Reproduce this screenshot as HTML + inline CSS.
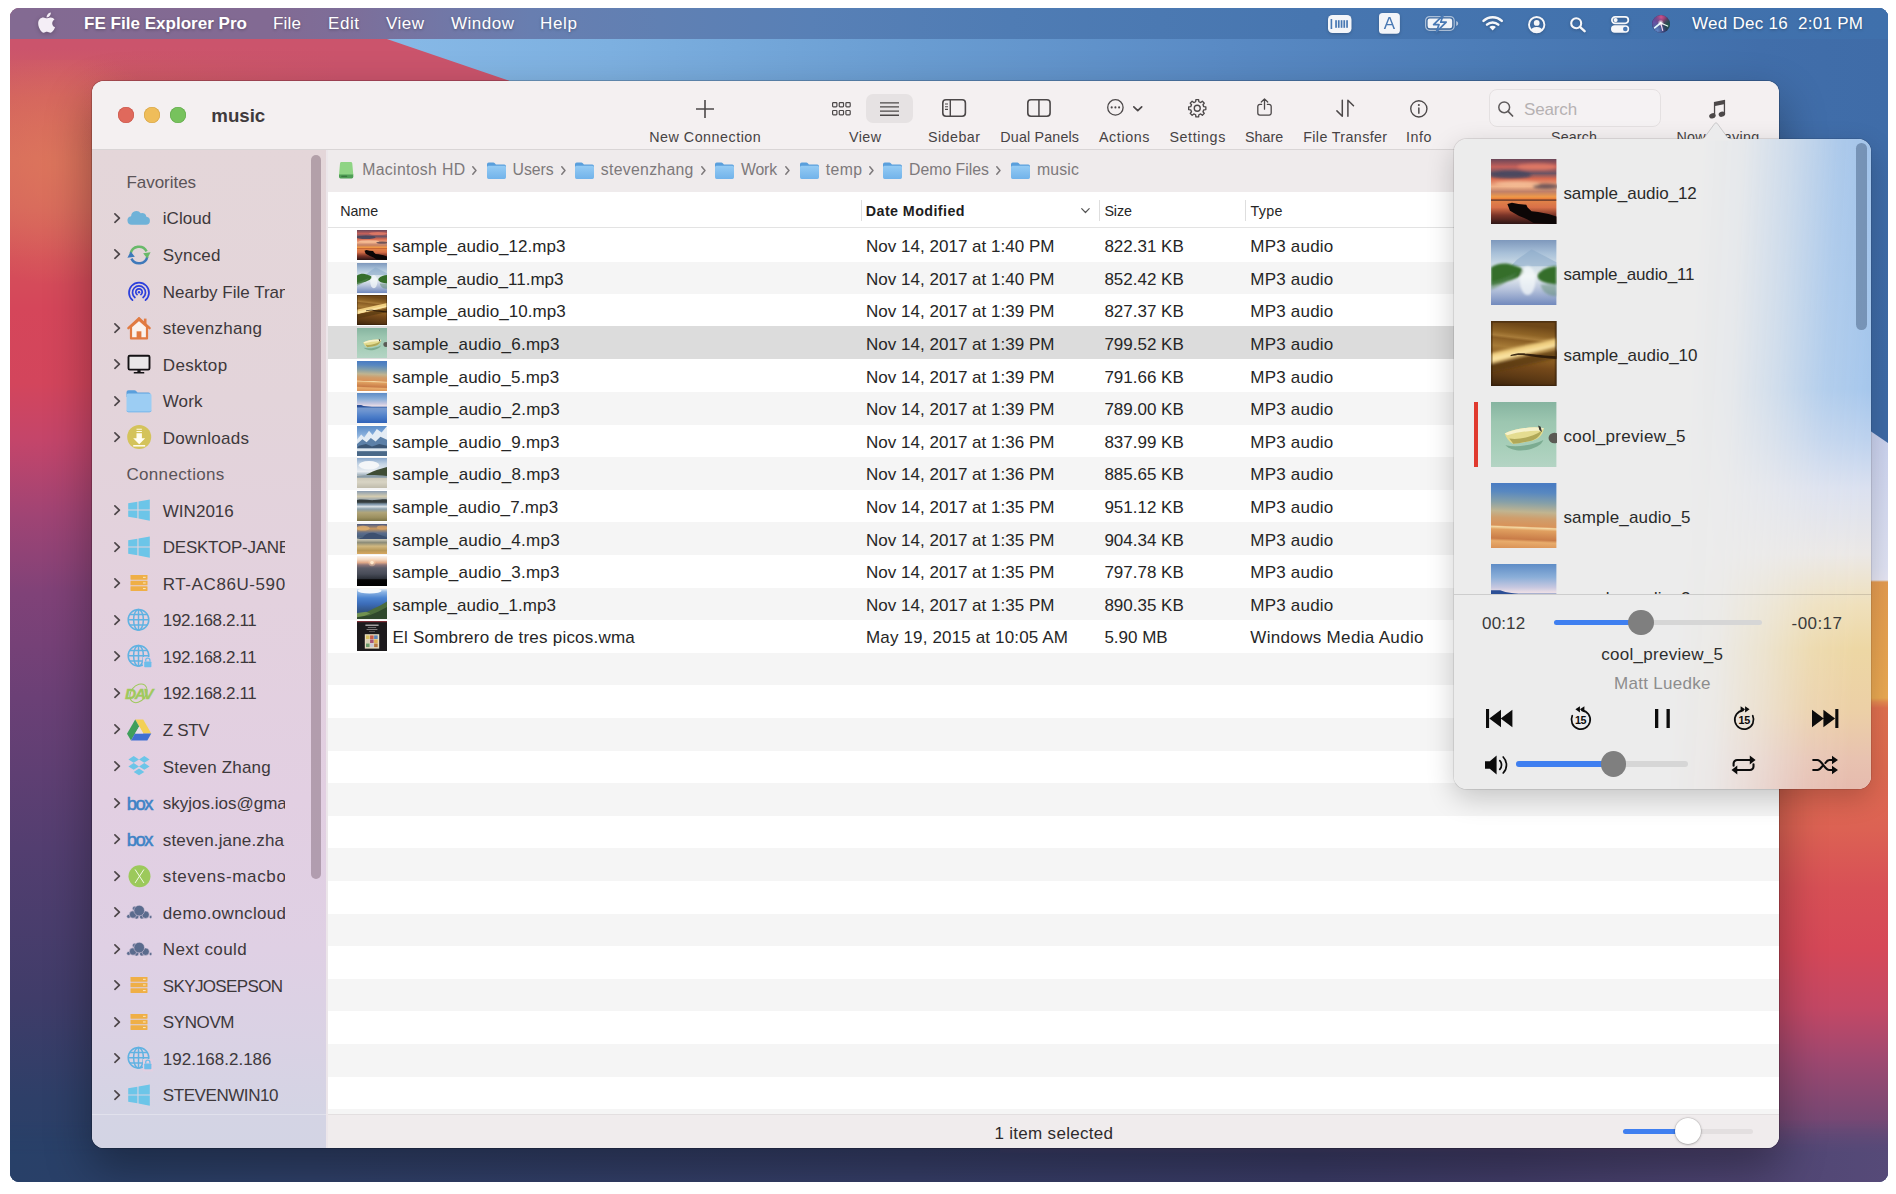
<!DOCTYPE html>
<html lang="en"><head><meta charset="utf-8"><title>FE File Explorer Pro - music</title>
<style>
html,body{margin:0;padding:0;background:#fff;}
body{width:1896px;height:1194px;position:relative;overflow:hidden;font-family:"Liberation Sans",sans-serif;}
.t{position:absolute;white-space:nowrap;line-height:20px;font-size:17px;}
#desk{position:absolute;left:10px;top:8px;width:1878px;height:1174px;border-radius:9px;overflow:hidden;background:#3f6ca8;}
#desk div,#desk svg{position:absolute;}
#menubar{left:0;top:0;width:1878px;height:31px;}
#menubar .t{color:#fff;text-shadow:0 1px 3px rgba(0,0,0,.28);}
#win{position:absolute;left:92px;top:81px;width:1687px;height:1067px;border-radius:12px;box-shadow:0 0 0 1px rgba(0,0,0,.18),0 20px 46px 2px rgba(0,0,0,.33);}
#winin{position:absolute;left:0;top:0;width:1687px;height:1067px;border-radius:12px;overflow:hidden;background:#fff;}
#winin div,#winin svg{position:absolute;}
#pop{position:absolute;left:1454px;top:139px;width:417px;height:650px;border-radius:13px;box-shadow:0 0 0 1px rgba(0,0,0,.09),0 9px 28px rgba(0,0,0,.20);}
#popin{position:absolute;left:0;top:0;width:417px;height:650px;border-radius:13px;overflow:hidden;background:#ececec;}
#popin div,#popin svg{position:absolute;}
.sb .t{color:#3d383b;}
#ov{position:absolute;left:10px;top:8px;width:1878px;height:1174px;border-radius:9px;overflow:hidden;}
#ovin{position:absolute;left:-10px;top:-8px;width:1896px;height:1194px;}

</style></head>
<body>
<div id="desk"><div class="" style="position:absolute;left:0.0px;top:0.0px;width:990.0px;height:1174.0px;background:linear-gradient(to bottom,#cb546c 0,#cb546c 40px,#d2605f 90px,#d66a5c 150px,#d5625c 200px,#d5505a 250px,#d5465a 300px,#d3455c 375px,#c4456a 432px,#a04474 507px,#804278 585px,#6b4076 690px,#533e70 840px,#403c69 990px,#2e3f68 1090px,#284068 1174px)"></div>
<div class="" style="position:absolute;left:0.0px;top:52.0px;width:320.0px;height:270.0px;background:radial-gradient(ellipse 120px 120px at 45px 105px,rgba(222,120,92,.75),rgba(222,120,92,0) 100%)"></div>
<div class="" style="position:absolute;left:990.0px;top:0.0px;width:888.0px;height:1174.0px;background:linear-gradient(to bottom,#3f6ca8 0,#3e6aa6 419px,#3e6aa6 420px,#c9d1ee 421px,#dfe2f3 560px,#e5e5f3 572px,#e49b50 574px,#eaa952 690px,#e58a50 694px,#e0704f 700px,#de6a50 760px,#dc6253 820px,#d85056 880px,#d64858 940px,#c44865 1000px,#a04870 1050px,#7e4873 1100px,#5e4a78 1150px,#4e4a79 1174px)"></div>
<div class="" style="position:absolute;left:1850.0px;top:412.0px;width:28.0px;height:25.0px;background:#3e6aa6;clip-path:polygon(6px 0,28px 0,28px 23px,6px 8px)"></div>
<div class="" style="position:absolute;left:0.0px;top:0.0px;width:1878.0px;height:152.0px;background:linear-gradient(to right,rgba(203,84,108,0) 70px,#cb546c 330px,#cb546c 700px,#3f6ca8 1300px)"></div>
<div class="" style="position:absolute;left:0.0px;top:0.0px;width:1878.0px;height:152.0px;background:linear-gradient(to right,#8abbe8 0,#86b8e6 400px,#7db0e0 600px,#6a9dd2 900px,#5a8bc5 1200px,#4b7bb6 1500px,#416eaa 1750px,#3f6ca8 1878px);clip-path:polygon(286px 0,1878px 0,1878px 152px,731px 152px)"></div>
<div class="" style="position:absolute;left:0.0px;top:1112.0px;width:1878.0px;height:62.0px;background:linear-gradient(to right,#284068 0,#2f4069 300px,#363e68 900px,#3a3b66 1300px,#423d69 1500px,#4d4472 1700px,#564a78 1878px);-webkit-mask-image:linear-gradient(to bottom,transparent 0,#000 34px);mask-image:linear-gradient(to bottom,transparent 0,#000 34px)"></div>
<div id="menubar" style="background:linear-gradient(to right,#836a92 0,#826a93 260px,#7d6e99 340px,#7277a6 430px,#687eb0 520px,#6080b3 650px,#5880b6 800px,#4f7cb4 1000px,#4776b0 1300px,#4272ad 1600px,#3f70ac 1878px)"><svg style="position:absolute;left:28.20px;top:3.80px;overflow:visible;filter:drop-shadow(0 1px 2px rgba(0,0,0,.25));" width="17.20" height="21.30" viewBox="0 28 384 456"><path fill="#f4eef6" d="M318.7 268.7c-.2-36.7 16.4-64.4 50-84.8-18.8-26.9-47.2-41.7-84.7-44.6-35.500-2.800-74.300 20.700-88.500 20.700-15 0-49.400-19.700-76.400-19.700C63.300 141.200 4 184.800 4 273.500q0 39.300 14.400 81.200c12.800 36.700 59 126.700 107.200 125.200 25.200-.600 43-17.900 75.800-17.900 31.800 0 48.300 17.900 76.400 17.900 48.600-.700 90.400-82.500 102.600-119.300-65.200-30.700-61.700-90-61.700-91.900zm-56.600-164.200c27.300-32.400 24.800-61.900 24-72.500-24.100 1.400-52 16.400-67.900 34.900-17.500 19.800-27.800 44.300-25.600 71.900 26.100 2 49.900-11.400 69.500-34.300z"/></svg><span id="t1" class="t " style="left:74.0px;top:6.4px;font-size:17px;color:#fff;font-weight:700;letter-spacing:0.027px;">FE File Explorer Pro</span><span id="t2" class="t " style="left:263.0px;top:6.4px;font-size:17px;color:#fff;letter-spacing:0.202px;">File</span><span id="t3" class="t " style="left:318.0px;top:6.4px;font-size:17px;color:#fff;letter-spacing:0.565px;">Edit</span><span id="t4" class="t " style="left:376.0px;top:6.4px;font-size:17px;color:#fff;letter-spacing:0.484px;">View</span><span id="t5" class="t " style="left:441.0px;top:6.4px;font-size:17px;color:#fff;letter-spacing:0.507px;">Window</span><span id="t6" class="t " style="left:530.0px;top:6.4px;font-size:17px;color:#fff;letter-spacing:0.679px;">Help</span><span id="t7" class="t " style="left:1682.0px;top:6.2px;font-size:17px;color:#fff;letter-spacing:0.278px;">Wed Dec 16&nbsp; 2:01 PM</span><svg style="position:absolute;left:1318.20px;top:6.80px;overflow:visible;filter:drop-shadow(0 1px 1.5px rgba(0,0,0,.22));" width="23.50" height="18.00" viewBox="0 0 23.5 18"><rect x="0" y="0" width="23.5" height="18" rx="4.5" fill="#f3f5f9"/><rect x="2.6" y="4" width="1.6" height="10" fill="#4878b3"/><rect x="7.2" y="5.2" width="1.7" height="7.6" fill="#4878b3"/><rect x="9.9" y="5.2" width="1.7" height="7.6" fill="#4878b3"/><rect x="12.7" y="5.2" width="1.7" height="7.6" fill="#4878b3"/><rect x="15.4" y="5.2" width="1.7" height="7.6" fill="#4878b3"/><rect x="18.2" y="5.2" width="1.7" height="7.6" fill="#4878b3"/></svg><svg style="position:absolute;left:1369.10px;top:5.20px;overflow:visible;filter:drop-shadow(0 1px 1.5px rgba(0,0,0,.22));" width="20.90" height="20.80" viewBox="0 0 20.9 20.8"><rect x="0" y="0" width="20.9" height="20.8" rx="3.6" fill="#f3f5f9"/><text x="10.45" y="16.4" font-family="Liberation Sans,sans-serif" font-size="17" text-anchor="middle" fill="#4878b3">A</text></svg><svg style="position:absolute;left:1415.00px;top:8.30px;overflow:visible;filter:drop-shadow(0 1px 1.5px rgba(0,0,0,.22));" width="33.20" height="14.90" viewBox="0 0 33.2 14.9"><rect x="0.6" y="0.6" width="28.6" height="13.7" rx="4" fill="none" stroke="#fff" stroke-opacity=".55" stroke-width="1.2"/><rect x="2.6" y="2.6" width="24.6" height="9.7" rx="2.2" fill="#f3f5f9"/><path d="M31.2 5v4.9c1.300-.400 2-1.400 2-2.450s-.700-2.050-2-2.450z" fill="#fff" fill-opacity=".6"/><path d="M18.200 -0.800 8.600 8.600h5.400l-2.600 7.200 9.800-9.600h-5.500z" fill="#f3f5f9" stroke="#4878b3" stroke-width="1.700" stroke-linejoin="round"/></svg><svg style="position:absolute;left:1472.00px;top:7.40px;overflow:visible;filter:drop-shadow(0 1px 1.5px rgba(0,0,0,.22));" width="21.30" height="15.50" viewBox="0 0 21.3 15.5"><g fill="none" stroke="#f6f7fa" stroke-width="2.5" stroke-linecap="round"><path d="M1.500 5.900a13.200 13.200 0 0 1 18.300 0"/><path d="M5 9.700a8.200 8.200 0 0 1 11.300 0"/></g><path d="M10.650 15.500 7.400 12.100a4.600 4.600 0 0 1 6.500 0z" fill="#f6f7fa"/></svg><svg style="position:absolute;left:1518.20px;top:7.60px;overflow:visible;filter:drop-shadow(0 1px 1.5px rgba(0,0,0,.22));" width="17.40" height="17.40" viewBox="0 0 17.4 17.4"><defs><clipPath id="ucp"><circle cx="8.7" cy="8.7" r="7.400"/></clipPath></defs><circle cx="8.7" cy="8.700" r="7.700" fill="none" stroke="#f6f7fa" stroke-width="1.900"/><circle cx="8.700" cy="6.900" r="2.900" fill="#f6f7fa"/><ellipse cx="8.700" cy="15.600" rx="6.200" ry="4.700" fill="#f6f7fa" clip-path="url(#ucp)"/></svg><svg style="position:absolute;left:1560.30px;top:8.70px;overflow:visible;filter:drop-shadow(0 1px 1.5px rgba(0,0,0,.22));" width="15.70" height="15.00" viewBox="0 0 15.7 15"><circle cx="6.200" cy="6.200" r="5" fill="none" stroke="#f6f7fa" stroke-width="2.100"/><path d="M9.900 9.900 14.600 14.200" stroke="#f6f7fa" stroke-width="2.400" stroke-linecap="round"/></svg><svg style="position:absolute;left:1601.40px;top:8.30px;overflow:visible;filter:drop-shadow(0 1px 1.5px rgba(0,0,0,.22));" width="18.20" height="16.70" viewBox="0 0 18.2 16.7"><rect x="0.900" y="0.900" width="16.400" height="6.400" rx="3.200" fill="none" stroke="#f6f7fa" stroke-width="1.800"/><circle cx="4.600" cy="4.100" r="2.100" fill="#f6f7fa"/><rect x="0" y="9.300" width="18.200" height="7.400" rx="3.700" fill="#f6f7fa"/><circle cx="14.300" cy="13" r="2.300" fill="#4878b3"/></svg><svg style="position:absolute;left:1642.00px;top:6.80px;overflow:visible;" width="18.00" height="18.00" viewBox="0 0 18 18"><defs><clipPath id="sgc"><circle cx="9" cy="9" r="8.900"/></clipPath><radialGradient id="sg1" cx=".5" cy=".12" r=".55"><stop offset="0" stop-color="#d0528c"/><stop offset="1" stop-color="#d0528c" stop-opacity="0"/></radialGradient><radialGradient id="sg2" cx=".1" cy=".4" r=".5"><stop offset="0" stop-color="#6a52a8"/><stop offset="1" stop-color="#6a52a8" stop-opacity="0"/></radialGradient><radialGradient id="sg3" cx=".95" cy=".55" r=".45"><stop offset="0" stop-color="#1f5a4c"/><stop offset="1" stop-color="#1f5a4c" stop-opacity="0"/></radialGradient><radialGradient id="sg4" cx=".3" cy=".85" r=".5"><stop offset="0" stop-color="#5f86c6"/><stop offset="1" stop-color="#5f86c6" stop-opacity="0"/></radialGradient><radialGradient id="sg5" cx=".5" cy=".5" r=".5"><stop offset="0" stop-color="#fff"/><stop offset="1" stop-color="#fff" stop-opacity="0"/></radialGradient><filter id="sgb" x="-30%" y="-30%" width="160%" height="160%"><feGaussianBlur stdDeviation=".550"/></filter></defs><circle cx="9" cy="9" r="9" fill="#2e2a58"/><g clip-path="url(#sgc)"><rect width="18" height="18" fill="url(#sg1)"/><rect width="18" height="18" fill="url(#sg2)"/><rect width="18" height="18" fill="url(#sg3)"/><rect width="18" height="18" fill="url(#sg4)"/><g filter="url(#sgb)" stroke-linecap="round"><path d="M8.700 8 2.600 12.800" stroke="#e4fbff" stroke-width="1.700"/><path d="M8.700 8 10.700 15.300" stroke="#f6d2f0" stroke-width="1.200"/><path d="M8.700 8 15.600 11" stroke="#eefaf2" stroke-width="1.300"/></g><circle cx="8.700" cy="7.800" r="3.200" fill="url(#sg5)"/></g></svg></div></div>
<div id="ov"><div id="ovin"><div id="win"><div id="winin" class="sb"><div class="" style="position:absolute;left:0.0px;top:0.0px;width:1687.0px;height:69.0px;background:#f4f0f1;border-bottom:1px solid #d9d5d6;box-sizing:border-box"></div>
<div class="" style="position:absolute;left:25.9px;top:25.9px;width:16.0px;height:16.0px;border-radius:50%;background:#e0695c;box-shadow:inset 0 0 0 .6px #c9574b"></div>
<div class="" style="position:absolute;left:51.9px;top:25.9px;width:16.0px;height:16.0px;border-radius:50%;background:#efbd5a;box-shadow:inset 0 0 0 .6px #d5a446"></div>
<div class="" style="position:absolute;left:77.9px;top:25.9px;width:16.0px;height:16.0px;border-radius:50%;background:#77c25d;box-shadow:inset 0 0 0 .6px #62a94b"></div>
<span id="t8" class="t " style="left:119.3px;top:24.9px;font-size:18.7px;color:#3f3a3c;font-weight:700;letter-spacing:-0.030px;">music</span>
<svg style="position:absolute;left:603.90px;top:18.50px;overflow:visible;" width="18.00" height="18.00" viewBox="0 0 18 18"><path d="M9 0v18M0 9h18" stroke="#4c4849" stroke-width="1.600" fill="none"/></svg>
<span id="t9" class="t " style="left:557.2px;top:45.5px;font-size:14.3px;color:#474344;letter-spacing:0.514px;">New Connection</span>
<svg style="position:absolute;left:739.60px;top:20.70px;overflow:visible;" width="18.80" height="13.50" viewBox="0 0 18.8 13.5"><rect x="0.60" y="0.60" width="4.300" height="4.300" rx=".800" fill="none" stroke="#4c4849" stroke-width="1.200"/><rect x="0.60" y="8.50" width="4.300" height="4.300" rx=".800" fill="none" stroke="#4c4849" stroke-width="1.200"/><rect x="7.25" y="0.60" width="4.300" height="4.300" rx=".800" fill="none" stroke="#4c4849" stroke-width="1.200"/><rect x="7.25" y="8.50" width="4.300" height="4.300" rx=".800" fill="none" stroke="#4c4849" stroke-width="1.200"/><rect x="13.90" y="0.60" width="4.300" height="4.300" rx=".800" fill="none" stroke="#4c4849" stroke-width="1.200"/><rect x="13.90" y="8.50" width="4.300" height="4.300" rx=".800" fill="none" stroke="#4c4849" stroke-width="1.200"/></svg>
<div class="" style="position:absolute;left:774.2px;top:13.3px;width:46.5px;height:28.5px;border-radius:7px;background:#e6e2e3"></div>
<svg style="position:absolute;left:788.00px;top:20.50px;overflow:visible;" width="19.00" height="14.00" viewBox="0 0 19 14"><path d="M0 0.80h19" stroke="#4c4849" stroke-width="1.300"/><path d="M0 4.95h19" stroke="#4c4849" stroke-width="1.300"/><path d="M0 9.10h19" stroke="#4c4849" stroke-width="1.300"/><path d="M0 13.25h19" stroke="#4c4849" stroke-width="1.300"/></svg>
<span id="t10" class="t " style="left:757.0px;top:45.5px;font-size:14.3px;color:#474344;letter-spacing:0.422px;">View</span>
<svg style="position:absolute;left:849.80px;top:18.40px;overflow:visible;" width="24.20" height="18.10" viewBox="0 0 24.2 18.1"><rect x=".800" y=".800" width="22.600" height="16.500" rx="3.200" fill="none" stroke="#4c4849" stroke-width="1.600"/><path d="M8.300 1v16.200" stroke="#4c4849" stroke-width="1.400"/><path d="M3 5h3M3 7.700h3M3 10.400h3" stroke="#4c4849" stroke-width="1.100"/></svg>
<span id="t11" class="t " style="left:836.0px;top:45.5px;font-size:14.3px;color:#474344;letter-spacing:0.453px;">Sidebar</span>
<svg style="position:absolute;left:935.40px;top:18.40px;overflow:visible;" width="23.90" height="18.10" viewBox="0 0 23.9 18.1"><rect x=".800" y=".800" width="22.300" height="16.500" rx="3.200" fill="none" stroke="#4c4849" stroke-width="1.600"/><path d="M11.950 1v16.200" stroke="#4c4849" stroke-width="1.500"/></svg>
<span id="t12" class="t " style="left:908.3px;top:45.5px;font-size:14.3px;color:#474344;letter-spacing:0.160px;">Dual Panels</span>
<svg style="position:absolute;left:1015.00px;top:18.40px;overflow:visible;" width="16.80" height="16.80" viewBox="0 0 16.8 16.8"><circle cx="8.400" cy="8.400" r="7.700" fill="none" stroke="#4c4849" stroke-width="1.300"/><circle cx="4.700" cy="8.400" r="1.050" fill="#4c4849"/><circle cx="8.400" cy="8.400" r="1.050" fill="#4c4849"/><circle cx="12.100" cy="8.400" r="1.050" fill="#4c4849"/></svg>
<svg style="position:absolute;left:1041.30px;top:25.40px;overflow:visible;" width="9.50" height="5.20" viewBox="0 0 9.5 5.2"><path d="M.800 .800 4.750 4.600 8.700 .800" fill="none" stroke="#4c4849" stroke-width="1.700" stroke-linecap="round" stroke-linejoin="round"/></svg>
<span id="t13" class="t " style="left:1007.0px;top:45.5px;font-size:14.3px;color:#474344;letter-spacing:0.585px;">Actions</span>
<svg style="position:absolute;left:1095.80px;top:18.40px;overflow:visible;" width="18.50" height="18.50" viewBox="0 0 18.5 18.5"><path d="M7.63 2.75L7.89 0.66L10.61 0.66L10.87 2.75L12.71 3.51L14.36 2.21L16.29 4.14L14.99 5.79L15.75 7.63L17.84 7.89L17.84 10.61L15.75 10.87L14.99 12.71L16.29 14.36L14.36 16.29L12.71 14.99L10.87 15.75L10.61 17.84L7.89 17.84L7.63 15.75L5.79 14.99L4.14 16.29L2.21 14.36L3.51 12.71L2.75 10.87L0.66 10.61L0.66 7.89L2.75 7.63L3.51 5.79L2.21 4.14L4.14 2.21L5.79 3.51Z" fill="none" stroke="#4c4849" stroke-width="1.350" stroke-linejoin="round"/><circle cx="9.250" cy="9.250" r="3" fill="none" stroke="#4c4849" stroke-width="1.350"/></svg>
<span id="t14" class="t " style="left:1077.4px;top:45.5px;font-size:14.3px;color:#474344;letter-spacing:0.605px;">Settings</span>
<svg style="position:absolute;left:1164.70px;top:17.00px;overflow:visible;" width="15.00" height="17.90" viewBox="0 0 15 17.9"><path d="M4.600 6.400H2.900a2.100 2.100 0 0 0-2.100 2.100v6.500a2.100 2.100 0 0 0 2.100 2.100h9.200a2.100 2.100 0 0 0 2.100-2.100V8.500a2.100 2.100 0 0 0-2.100-2.100h-1.700" fill="none" stroke="#4c4849" stroke-width="1.300" stroke-linecap="round"/><path d="M7.500 11.200V1M4.300 4 7.500 .900 10.700 4" fill="none" stroke="#4c4849" stroke-width="1.300" stroke-linecap="round" stroke-linejoin="round"/></svg>
<span id="t15" class="t " style="left:1153.0px;top:45.5px;font-size:14.3px;color:#474344;letter-spacing:0.034px;">Share</span>
<svg style="position:absolute;left:1243.90px;top:18.40px;overflow:visible;" width="18.50" height="18.10" viewBox="0 0 18.5 18.1"><path d="M6.300 1.200V17.300L.900 11.900" fill="none" stroke="#4c4849" stroke-width="1.500" stroke-linecap="round" stroke-linejoin="round"/><path d="M11.900 17.300V1.200L17.500 6.800" fill="none" stroke="#4c4849" stroke-width="1.500" stroke-linecap="round" stroke-linejoin="round"/></svg>
<span id="t16" class="t " style="left:1211.2px;top:45.5px;font-size:14.3px;color:#474344;letter-spacing:0.370px;">File Transfer</span>
<svg style="position:absolute;left:1317.90px;top:18.95px;overflow:visible;" width="17.70" height="17.70" viewBox="0 0 17.7 17.7"><circle cx="8.850" cy="8.850" r="8.100" fill="none" stroke="#4c4849" stroke-width="1.400"/><circle cx="8.850" cy="5" r="1.050" fill="#4c4849"/><path d="M8.850 7.900v5.400" fill="none" stroke="#4c4849" stroke-width="1.500" stroke-linecap="round"/></svg>
<span id="t17" class="t " style="left:1314.1px;top:45.5px;font-size:14.3px;color:#474344;letter-spacing:0.480px;">Info</span>
<div class="" style="position:absolute;left:1396.5px;top:8.3px;width:172.4px;height:37.9px;border-radius:8px;background:#f5f2f3;border:1px solid #e4e0e1;box-sizing:border-box"></div>
<svg style="position:absolute;left:1406.00px;top:19.50px;overflow:visible;" width="15.40" height="16.00" viewBox="0 0 15.4 16"><circle cx="6.200" cy="6.300" r="5.400" fill="none" stroke="#5e5a5b" stroke-width="1.500"/><path d="M10.100 10.300 14.600 15" stroke="#5e5a5b" stroke-width="1.700" stroke-linecap="round"/></svg>
<span id="t18" class="t " style="left:1432.0px;top:18.6px;font-size:17px;color:#b5b1b2;letter-spacing:-0.134px;">Search</span>
<span id="t19" class="t " style="left:1459.0px;top:45.5px;font-size:14.3px;color:#474344;letter-spacing:0.137px;">Search</span>
<svg style="position:absolute;left:1617.40px;top:18.50px;overflow:visible;" width="16.60" height="18.60" viewBox="0 0 16.6 18.6"><g fill="#4c4849"><ellipse cx="3.400" cy="15.800" rx="3.300" ry="2.550" transform="rotate(-20 3.400 15.800)"/><ellipse cx="12.900" cy="14.200" rx="3.300" ry="2.550" transform="rotate(-20 12.900 14.200)"/><path d="M4.900 1.900 16.100 -.300V14.200H14.800V4.200L6.200 6V15.800H4.900z"/></g></svg>
<span id="t20" class="t " style="left:1584.4px;top:45.5px;font-size:14.3px;color:#474344;letter-spacing:0.342px;">Now Playing</span>
<div class="" style="position:absolute;left:236.0px;top:69.0px;width:1451.0px;height:41.6px;background:#efebec"></div>
<svg style="position:absolute;left:247.00px;top:80.60px;overflow:visible;" width="14.30" height="16.40" viewBox="0 0 14.3 16.4"><path d="M2.600 0h9.100a1.600 1.600 0 0 1 1.600 1.400l1 11.600H0L1 1.400A1.600 1.600 0 0 1 2.600 0z" fill="#8fd484"/><path d="M0 12.500h14.300v2.300a1.600 1.600 0 0 1-1.600 1.600H1.600A1.600 1.600 0 0 1 0 14.800z" fill="#4f9e55"/><rect x="2.200" y="13.800" width="6" height="1" rx=".5" fill="#356e3a"/></svg>
<span id="t21" class="t " style="left:270.2px;top:79.4px;font-size:15.8px;color:#7d797b;letter-spacing:0.336px;">Macintosh HD</span>
<svg style="position:absolute;left:380.40px;top:85.30px;overflow:visible;" width="4.70" height="9.00" viewBox="0 0 4.7 9"><path d="M.800 .800 4 4.500 .800 8.200" fill="none" stroke="#7d797b" stroke-width="1.500" stroke-linecap="round" stroke-linejoin="round"/></svg>
<span id="t22" class="t " style="left:420.6px;top:79.4px;font-size:15.8px;color:#7d797b;letter-spacing:-0.038px;">Users</span>
<svg style="position:absolute;left:394.60px;top:80.60px;overflow:visible;" width="19.00" height="16.90" viewBox="0 0 19 16.9"><defs><linearGradient id="fg" x1="0" y1="0" x2="0" y2="1"><stop offset="0" stop-color="#95cbf4"/><stop offset="1" stop-color="#72b3ea"/></linearGradient></defs><path d="M0 2.200A1.700 1.700 0 0 1 1.700 .500H6.300c.600 0 1.100.250 1.500.700l1.100 1.300h8.400A1.700 1.700 0 0 1 19 4.200V6H0z" fill="#5a9fdc"/><path d="M0 5.200A1.500 1.500 0 0 1 1.500 3.700h16A1.500 1.500 0 0 1 19 5.200v10.100a1.600 1.600 0 0 1-1.600 1.600H1.600A1.600 1.600 0 0 1 0 15.300z" fill="url(#fg)"/></svg>
<svg style="position:absolute;left:469.00px;top:85.30px;overflow:visible;" width="4.70" height="9.00" viewBox="0 0 4.7 9"><path d="M.800 .800 4 4.500 .800 8.200" fill="none" stroke="#7d797b" stroke-width="1.500" stroke-linecap="round" stroke-linejoin="round"/></svg>
<span id="t23" class="t " style="left:508.8px;top:79.4px;font-size:15.8px;color:#7d797b;letter-spacing:0.300px;">stevenzhang</span>
<svg style="position:absolute;left:483.30px;top:80.60px;overflow:visible;" width="19.00" height="16.90" viewBox="0 0 19 16.9"><defs><linearGradient id="fg" x1="0" y1="0" x2="0" y2="1"><stop offset="0" stop-color="#95cbf4"/><stop offset="1" stop-color="#72b3ea"/></linearGradient></defs><path d="M0 2.200A1.700 1.700 0 0 1 1.700 .500H6.300c.600 0 1.100.250 1.500.700l1.100 1.300h8.400A1.700 1.700 0 0 1 19 4.200V6H0z" fill="#5a9fdc"/><path d="M0 5.200A1.500 1.500 0 0 1 1.500 3.700h16A1.500 1.500 0 0 1 19 5.200v10.100a1.600 1.600 0 0 1-1.600 1.600H1.600A1.600 1.600 0 0 1 0 15.300z" fill="url(#fg)"/></svg>
<svg style="position:absolute;left:608.70px;top:85.30px;overflow:visible;" width="4.70" height="9.00" viewBox="0 0 4.7 9"><path d="M.800 .800 4 4.500 .800 8.200" fill="none" stroke="#7d797b" stroke-width="1.500" stroke-linecap="round" stroke-linejoin="round"/></svg>
<span id="t24" class="t " style="left:648.9px;top:79.4px;font-size:15.8px;color:#7d797b;letter-spacing:-0.092px;">Work</span>
<svg style="position:absolute;left:623.00px;top:80.60px;overflow:visible;" width="19.00" height="16.90" viewBox="0 0 19 16.9"><defs><linearGradient id="fg" x1="0" y1="0" x2="0" y2="1"><stop offset="0" stop-color="#95cbf4"/><stop offset="1" stop-color="#72b3ea"/></linearGradient></defs><path d="M0 2.200A1.700 1.700 0 0 1 1.700 .500H6.300c.600 0 1.100.250 1.500.700l1.100 1.300h8.400A1.700 1.700 0 0 1 19 4.200V6H0z" fill="#5a9fdc"/><path d="M0 5.200A1.500 1.500 0 0 1 1.500 3.700h16A1.500 1.500 0 0 1 19 5.200v10.100a1.600 1.600 0 0 1-1.600 1.600H1.600A1.600 1.600 0 0 1 0 15.300z" fill="url(#fg)"/></svg>
<svg style="position:absolute;left:692.50px;top:85.30px;overflow:visible;" width="4.70" height="9.00" viewBox="0 0 4.7 9"><path d="M.800 .800 4 4.500 .800 8.200" fill="none" stroke="#7d797b" stroke-width="1.500" stroke-linecap="round" stroke-linejoin="round"/></svg>
<span id="t25" class="t " style="left:733.7px;top:79.4px;font-size:15.8px;color:#7d797b;letter-spacing:0.393px;">temp</span>
<svg style="position:absolute;left:707.80px;top:80.60px;overflow:visible;" width="19.00" height="16.90" viewBox="0 0 19 16.9"><defs><linearGradient id="fg" x1="0" y1="0" x2="0" y2="1"><stop offset="0" stop-color="#95cbf4"/><stop offset="1" stop-color="#72b3ea"/></linearGradient></defs><path d="M0 2.200A1.700 1.700 0 0 1 1.700 .500H6.300c.600 0 1.100.250 1.500.700l1.100 1.300h8.400A1.700 1.700 0 0 1 19 4.200V6H0z" fill="#5a9fdc"/><path d="M0 5.200A1.500 1.500 0 0 1 1.500 3.700h16A1.500 1.500 0 0 1 19 5.200v10.100a1.600 1.600 0 0 1-1.600 1.600H1.600A1.600 1.600 0 0 1 0 15.300z" fill="url(#fg)"/></svg>
<svg style="position:absolute;left:777.30px;top:85.30px;overflow:visible;" width="4.70" height="9.00" viewBox="0 0 4.7 9"><path d="M.800 .800 4 4.500 .800 8.200" fill="none" stroke="#7d797b" stroke-width="1.500" stroke-linecap="round" stroke-linejoin="round"/></svg>
<span id="t26" class="t " style="left:817.1px;top:79.4px;font-size:15.8px;color:#7d797b;letter-spacing:-0.020px;">Demo Files</span>
<svg style="position:absolute;left:791.10px;top:80.60px;overflow:visible;" width="19.00" height="16.90" viewBox="0 0 19 16.9"><defs><linearGradient id="fg" x1="0" y1="0" x2="0" y2="1"><stop offset="0" stop-color="#95cbf4"/><stop offset="1" stop-color="#72b3ea"/></linearGradient></defs><path d="M0 2.200A1.700 1.700 0 0 1 1.700 .500H6.300c.600 0 1.100.250 1.500.700l1.100 1.300h8.400A1.700 1.700 0 0 1 19 4.200V6H0z" fill="#5a9fdc"/><path d="M0 5.200A1.500 1.500 0 0 1 1.500 3.700h16A1.500 1.500 0 0 1 19 5.200v10.100a1.600 1.600 0 0 1-1.600 1.600H1.600A1.600 1.600 0 0 1 0 15.300z" fill="url(#fg)"/></svg>
<svg style="position:absolute;left:904.10px;top:85.30px;overflow:visible;" width="4.70" height="9.00" viewBox="0 0 4.7 9"><path d="M.800 .800 4 4.500 .800 8.200" fill="none" stroke="#7d797b" stroke-width="1.500" stroke-linecap="round" stroke-linejoin="round"/></svg>
<span id="t27" class="t " style="left:944.9px;top:79.4px;font-size:15.8px;color:#7d797b;letter-spacing:0.212px;">music</span>
<svg style="position:absolute;left:918.50px;top:80.60px;overflow:visible;" width="19.00" height="16.90" viewBox="0 0 19 16.9"><defs><linearGradient id="fg" x1="0" y1="0" x2="0" y2="1"><stop offset="0" stop-color="#95cbf4"/><stop offset="1" stop-color="#72b3ea"/></linearGradient></defs><path d="M0 2.200A1.700 1.700 0 0 1 1.700 .500H6.300c.600 0 1.100.250 1.500.700l1.100 1.300h8.400A1.700 1.700 0 0 1 19 4.200V6H0z" fill="#5a9fdc"/><path d="M0 5.200A1.500 1.500 0 0 1 1.500 3.700h16A1.500 1.500 0 0 1 19 5.200v10.100a1.600 1.600 0 0 1-1.600 1.600H1.600A1.600 1.600 0 0 1 0 15.300z" fill="url(#fg)"/></svg>
<div class="" style="position:absolute;left:236.0px;top:1033.0px;width:1451.0px;height:34.0px;background:#f0eced;border-top:1px solid #e3dfe0;box-sizing:border-box"></div>
<span id="t28" class="t " style="left:902.5px;top:1043.2px;font-size:17px;color:#2e2a2b;letter-spacing:0.297px;">1 item selected</span>
<div class="" style="position:absolute;left:1530.8px;top:1048.2px;width:130.3px;height:4.6px;border-radius:3px;background:#e3dfe0"></div>
<div class="" style="position:absolute;left:1530.8px;top:1048.2px;width:67.2px;height:4.6px;border-radius:3px;background:#3f7ff0"></div>
<div class="" style="position:absolute;left:1583.1px;top:1037.4px;width:26.0px;height:26.0px;border-radius:50%;background:#fff;box-shadow:0 .5px 2.500px rgba(0,0,0,.35),0 0 0 .5px rgba(0,0,0,.10)"></div>
<div class="" style="position:absolute;left:0.0px;top:69.0px;width:234.0px;height:998.0px;background:linear-gradient(to bottom,#e4d6d9 0,#e3d4da 250px,#e3d1de 450px,#e2cfe2 650px,#dfd0e4 800px,#d9d2e4 900px,#d4d4e4 964px,#d3d4e4 997px)"></div>
<div class="" style="position:absolute;left:234.0px;top:69.0px;width:2.0px;height:998.0px;background:#ece6ea"></div>
<div class="" style="position:absolute;left:0.0px;top:1032.5px;width:234.0px;height:1.5px;background:rgba(255,255,255,.30)"></div>
<div class="" style="position:absolute;left:219.0px;top:73.5px;width:10.0px;height:724.5px;border-radius:5px;background:rgba(120,95,110,.45)"></div>
<span id="t29" class="t " style="left:34.4px;top:91.9px;font-size:17px;color:#5b5458;letter-spacing:-0.028px;">Favorites</span>
<svg style="position:absolute;left:22.40px;top:131.90px;overflow:visible;" width="6.30" height="10.20" viewBox="0 0 6.3 10.2"><path d="M.900 .900 5.400 5.100 .900 9.300" fill="none" stroke="#4d4649" stroke-width="1.700" stroke-linecap="round" stroke-linejoin="round"/></svg>
<svg style="position:absolute;left:34.40px;top:124.00px;overflow:visible;" width="26.00" height="26.00" viewBox="0 0 26 26"><path d="M5.800 19.800a4.300 4.300 0 0 1-.700-8.550 5.300 5.300 0 0 1 9.600-2.900 4.200 4.200 0 0 1 5.700 3.300 4.100 4.100 0 0 1-.400 8.150z" fill="#6fb2d8"/></svg>
<svg style="position:absolute;left:22.40px;top:168.44px;overflow:visible;" width="6.30" height="10.20" viewBox="0 0 6.3 10.2"><path d="M.900 .900 5.400 5.100 .900 9.300" fill="none" stroke="#4d4649" stroke-width="1.700" stroke-linecap="round" stroke-linejoin="round"/></svg>
<svg style="position:absolute;left:34.40px;top:160.54px;overflow:visible;" width="26.00" height="26.00" viewBox="0 0 26 26"><g fill="none" stroke-width="2.500"><path d="M4.600 11.600A8.600 8.600 0 0 1 20.600 9.300" stroke="#69b96a"/><path d="M21.400 14.400A8.600 8.600 0 0 1 5.400 16.700" stroke="#3e79ba"/></g><path d="M17.200 11.300 24.600 10.300 21.300 16.600z" fill="#69b96a"/><path d="M8.800 14.700 1.400 15.700 4.700 9.400z" fill="#3e79ba"/></svg>
<svg style="position:absolute;left:34.40px;top:197.08px;overflow:visible;" width="26.00" height="26.00" viewBox="0 0 26 26"><g fill="none" stroke="#2c40dc" stroke-width="1.700" stroke-linecap="round"><path d="M6.500 22.200A10 10 0 1 1 19.500 22.200"/><path d="M8.900 19.500A6.500 6.500 0 1 1 17.100 19.500"/><path d="M11.100 16.600A3.200 3.200 0 1 1 14.900 16.600"/></g><circle cx="13" cy="14.200" r="1.200" fill="#2c40dc"/></svg>
<svg style="position:absolute;left:22.40px;top:241.52px;overflow:visible;" width="6.30" height="10.20" viewBox="0 0 6.3 10.2"><path d="M.900 .900 5.400 5.100 .900 9.300" fill="none" stroke="#4d4649" stroke-width="1.700" stroke-linecap="round" stroke-linejoin="round"/></svg>
<svg style="position:absolute;left:34.40px;top:233.62px;overflow:visible;" width="26.00" height="26.00" viewBox="0 0 26 26"><path d="M13 3.400 2.400 13.200" stroke="#e17b42" stroke-width="2.400" stroke-linecap="round"/><path d="M13 3.400 23.600 13.200" stroke="#e17b42" stroke-width="2.400" stroke-linecap="round"/><rect x="17.900" y="3.600" width="2.600" height="5.500" fill="#e17b42"/><path d="M5 11.800 13 4.600 21 11.800V23.400H5z" fill="#fbf3ee" stroke="#e17b42" stroke-width="2.200" stroke-linejoin="round"/><rect x="10.600" y="16.300" width="4.800" height="7.200" fill="#e17b42"/></svg>
<svg style="position:absolute;left:22.40px;top:278.06px;overflow:visible;" width="6.30" height="10.20" viewBox="0 0 6.3 10.2"><path d="M.900 .900 5.400 5.100 .900 9.300" fill="none" stroke="#4d4649" stroke-width="1.700" stroke-linecap="round" stroke-linejoin="round"/></svg>
<svg style="position:absolute;left:34.40px;top:270.16px;overflow:visible;" width="26.00" height="26.00" viewBox="0 0 26 26"><g transform="translate(0 1.200)"><rect x="2.500" y="3.600" width="21" height="13.800" rx="1.300" fill="#e9e7e8" stroke="#141214" stroke-width="1.900"/><rect x="11.400" y="17.900" width="3.200" height="2.300" fill="#141214"/><rect x="7.700" y="19.700" width="10.600" height="1.700" rx=".500" fill="#141214"/></g></svg>
<svg style="position:absolute;left:22.40px;top:314.60px;overflow:visible;" width="6.30" height="10.20" viewBox="0 0 6.3 10.2"><path d="M.900 .900 5.400 5.100 .900 9.300" fill="none" stroke="#4d4649" stroke-width="1.700" stroke-linecap="round" stroke-linejoin="round"/></svg>
<svg style="position:absolute;left:34.40px;top:306.70px;overflow:visible;" width="26.00" height="26.00" viewBox="0 0 26 26"><path d="M.500 4.300A2 2 0 0 1 2.500 2.300H8.400c.800 0 1.400.300 1.900.900l1.200 1.400h11A2 2 0 0 1 24.500 6.600V9H.500z" fill="#5a9fdc"/><path d="M.500 7.300A1.800 1.800 0 0 1 2.300 5.500H23.700A1.800 1.800 0 0 1 25.500 7.300V22.300a2 2 0 0 1-2 2H2.500a2 2 0 0 1-2-2z" fill="#9ccdf3"/><path d="M.500 22v.300a2 2 0 0 0 2 2h21a2 2 0 0 0 2-2V22a2 2 0 0 1-2 1.500H2.500A2 2 0 0 1 .500 22z" fill="#6fb0e8"/></svg>
<svg style="position:absolute;left:22.40px;top:351.14px;overflow:visible;" width="6.30" height="10.20" viewBox="0 0 6.3 10.2"><path d="M.900 .900 5.400 5.100 .900 9.300" fill="none" stroke="#4d4649" stroke-width="1.700" stroke-linecap="round" stroke-linejoin="round"/></svg>
<svg style="position:absolute;left:34.40px;top:343.24px;overflow:visible;" width="26.00" height="26.00" viewBox="0 0 26 26"><circle cx="13.200" cy="13" r="12" fill="#d4c35b"/><path d="M10.500 5.300h5.400M10.500 7.500h5.400" stroke="#fffbe8" stroke-width="1.100"/><path d="M10.500 9.300h5.400v5h3.300l-6 6-6-6h3.300z" fill="#fffdf2"/><path d="M7.200 21.800h12" stroke="#fffdf2" stroke-width="1.500"/></svg>
<span id="t37" class="t " style="left:34.4px;top:384.2px;font-size:17px;color:#5b5458;letter-spacing:0.348px;">Connections</span>
<svg style="position:absolute;left:22.40px;top:424.22px;overflow:visible;" width="6.30" height="10.20" viewBox="0 0 6.3 10.2"><path d="M.900 .900 5.400 5.100 .900 9.300" fill="none" stroke="#4d4649" stroke-width="1.700" stroke-linecap="round" stroke-linejoin="round"/></svg>
<svg style="position:absolute;left:34.40px;top:416.32px;overflow:visible;" width="26.00" height="26.00" viewBox="0 0 26 26"><path d="M2.200 6.300 11.400 4.800V12.400H2.200z" fill="#6cc5e8"/><path d="M12.500 4.600 23.800 2.500V12.400H12.500z" fill="#6cc5e8"/><path d="M2.200 13.500H11.400V21.200L2.200 19.700z" fill="#6cc5e8"/><path d="M12.500 13.500H23.800V23.700L12.500 21.500z" fill="#6cc5e8"/></svg>
<svg style="position:absolute;left:22.40px;top:460.76px;overflow:visible;" width="6.30" height="10.20" viewBox="0 0 6.3 10.2"><path d="M.900 .900 5.400 5.100 .900 9.300" fill="none" stroke="#4d4649" stroke-width="1.700" stroke-linecap="round" stroke-linejoin="round"/></svg>
<svg style="position:absolute;left:34.40px;top:452.86px;overflow:visible;" width="26.00" height="26.00" viewBox="0 0 26 26"><path d="M2.200 6.300 11.400 4.800V12.400H2.200z" fill="#6cc5e8"/><path d="M12.500 4.600 23.800 2.500V12.400H12.500z" fill="#6cc5e8"/><path d="M2.200 13.500H11.400V21.200L2.200 19.700z" fill="#6cc5e8"/><path d="M12.500 13.500H23.800V23.700L12.500 21.500z" fill="#6cc5e8"/></svg>
<svg style="position:absolute;left:22.40px;top:497.30px;overflow:visible;" width="6.30" height="10.20" viewBox="0 0 6.3 10.2"><path d="M.900 .900 5.400 5.100 .900 9.300" fill="none" stroke="#4d4649" stroke-width="1.700" stroke-linecap="round" stroke-linejoin="round"/></svg>
<svg style="position:absolute;left:34.40px;top:489.40px;overflow:visible;" width="26.00" height="26.00" viewBox="0 0 26 26"><rect x="4.500" y="5.1" width="17" height="4.600" rx=".400" fill="#efaf46"/><rect x="17" y="6.8" width="2.700" height="1.100" fill="#fbe4b4"/><rect x="4.500" y="10.7" width="17" height="4.600" rx=".400" fill="#efaf46"/><rect x="17" y="12.4" width="2.700" height="1.100" fill="#fbe4b4"/><rect x="4.500" y="16.3" width="17" height="4.600" rx=".400" fill="#efaf46"/><rect x="17" y="18.0" width="2.700" height="1.100" fill="#fbe4b4"/></svg>
<svg style="position:absolute;left:22.40px;top:533.84px;overflow:visible;" width="6.30" height="10.20" viewBox="0 0 6.3 10.2"><path d="M.900 .900 5.400 5.100 .900 9.300" fill="none" stroke="#4d4649" stroke-width="1.700" stroke-linecap="round" stroke-linejoin="round"/></svg>
<svg style="position:absolute;left:34.40px;top:525.94px;overflow:visible;" width="26.00" height="26.00" viewBox="0 0 26 26"><g fill="none" stroke="#60b2e2" stroke-width="1.500"><circle cx="12.500" cy="12.800" r="10.300"/><ellipse cx="12.500" cy="12.800" rx="4.900" ry="10.300"/><path d="M12.500 2.500v20.600M2.200 12.800h20.600M3.700 7.600h17.600M3.700 18h17.600"/></g></svg>
<svg style="position:absolute;left:22.40px;top:570.38px;overflow:visible;" width="6.30" height="10.20" viewBox="0 0 6.3 10.2"><path d="M.900 .900 5.400 5.100 .900 9.300" fill="none" stroke="#4d4649" stroke-width="1.700" stroke-linecap="round" stroke-linejoin="round"/></svg>
<svg style="position:absolute;left:34.40px;top:562.48px;overflow:visible;" width="26.00" height="26.00" viewBox="0 0 26 26"><g fill="none" stroke="#60b2e2" stroke-width="1.500"><circle cx="12.500" cy="12.800" r="10.300"/><ellipse cx="12.500" cy="12.800" rx="4.900" ry="10.300"/><path d="M12.500 2.500v20.600M2.200 12.800h20.600M3.700 7.600h17.600M3.700 18h17.600"/></g><rect x="16.900" y="14" width="10" height="12.300" fill="#e3cfe1"/><rect x="18.200" y="18.400" width="7.200" height="5.800" rx=".800" fill="#6dbdea"/><path d="M19.700 18.600v-1.300a2.100 2.100 0 0 1 4.200 0v1.300" fill="none" stroke="#6dbdea" stroke-width="1.300"/></svg>
<svg style="position:absolute;left:22.40px;top:606.92px;overflow:visible;" width="6.30" height="10.20" viewBox="0 0 6.3 10.2"><path d="M.900 .900 5.400 5.100 .900 9.300" fill="none" stroke="#4d4649" stroke-width="1.700" stroke-linecap="round" stroke-linejoin="round"/></svg>
<svg style="position:absolute;left:34.40px;top:599.02px;overflow:visible;" width="26.00" height="26.00" viewBox="0 0 26 26"><ellipse cx="12.500" cy="13.300" rx="7.500" ry="10.300" fill="none" stroke="#9fc95c" stroke-width="1" transform="rotate(38 12.500 13.300)"/><text x="12.600" y="18.800" text-anchor="middle" font-family="Liberation Sans,sans-serif" font-weight="700" font-style="italic" font-size="15.500" letter-spacing="-1.500" fill="#9fc95c" stroke="#9fc95c" stroke-width=".400">DAV</text></svg>
<svg style="position:absolute;left:22.40px;top:643.46px;overflow:visible;" width="6.30" height="10.20" viewBox="0 0 6.3 10.2"><path d="M.900 .900 5.400 5.100 .900 9.300" fill="none" stroke="#4d4649" stroke-width="1.700" stroke-linecap="round" stroke-linejoin="round"/></svg>
<svg style="position:absolute;left:34.40px;top:635.56px;overflow:visible;" width="26.00" height="26.00" viewBox="0 0 26 26"><path d="M9.200 2.500H17.200L25.300 16.500H17.300z" fill="#f3d056"/><path d="M9.200 2.500 1 16.700 5 23.600 13.200 9.400z" fill="#3f9f5c"/><path d="M9 16.500H25.300L21.300 23.600H5z" fill="#4070d2"/><path d="M13.200 9.400 17.300 16.500H9z" fill="#e8e0ea"/></svg>
<svg style="position:absolute;left:22.40px;top:680.00px;overflow:visible;" width="6.30" height="10.20" viewBox="0 0 6.3 10.2"><path d="M.900 .900 5.400 5.100 .900 9.300" fill="none" stroke="#4d4649" stroke-width="1.700" stroke-linecap="round" stroke-linejoin="round"/></svg>
<svg style="position:absolute;left:34.40px;top:672.10px;overflow:visible;" width="26.00" height="26.00" viewBox="0 0 26 26"><path d="M7.7 3.1l5.300 3.300-5.300 3.300-5.300-3.300zM18.3 3.1l5.300 3.300-5.300 3.300-5.300-3.300zM7.7 10.1l5.300 3.300-5.300 3.300-5.300-3.300zM18.3 10.1l5.300 3.300-5.300 3.300-5.300-3.300zM13 15.600l5.300 3.300-5.300 3.300-5.300-3.300z" fill="#6cc5e8"/></svg>
<svg style="position:absolute;left:22.40px;top:716.54px;overflow:visible;" width="6.30" height="10.20" viewBox="0 0 6.3 10.2"><path d="M.900 .900 5.400 5.100 .900 9.300" fill="none" stroke="#4d4649" stroke-width="1.700" stroke-linecap="round" stroke-linejoin="round"/></svg>
<svg style="position:absolute;left:34.40px;top:708.64px;overflow:visible;" width="26.00" height="26.00" viewBox="0 0 26 26"><text x="13.400" y="20.100" text-anchor="middle" font-family="Liberation Sans,sans-serif" font-size="18.400" letter-spacing="-1.500" fill="#3f83c6" stroke="#3f83c6" stroke-width=".550">box</text></svg>
<svg style="position:absolute;left:22.40px;top:753.08px;overflow:visible;" width="6.30" height="10.20" viewBox="0 0 6.3 10.2"><path d="M.900 .900 5.400 5.100 .900 9.300" fill="none" stroke="#4d4649" stroke-width="1.700" stroke-linecap="round" stroke-linejoin="round"/></svg>
<svg style="position:absolute;left:34.40px;top:745.18px;overflow:visible;" width="26.00" height="26.00" viewBox="0 0 26 26"><text x="13.400" y="20.100" text-anchor="middle" font-family="Liberation Sans,sans-serif" font-size="18.400" letter-spacing="-1.500" fill="#3f83c6" stroke="#3f83c6" stroke-width=".550">box</text></svg>
<svg style="position:absolute;left:22.40px;top:789.62px;overflow:visible;" width="6.30" height="10.20" viewBox="0 0 6.3 10.2"><path d="M.900 .900 5.400 5.100 .900 9.300" fill="none" stroke="#4d4649" stroke-width="1.700" stroke-linecap="round" stroke-linejoin="round"/></svg>
<svg style="position:absolute;left:34.40px;top:781.72px;overflow:visible;" width="26.00" height="26.00" viewBox="0 0 26 26"><circle cx="13.500" cy="13.200" r="11" fill="#9cc95b"/><path d="M9.300 6.800 17.700 19.600M17.700 6.800 9.300 19.600" stroke="#f4fbe8" stroke-width="1" stroke-linecap="round"/></svg>
<svg style="position:absolute;left:22.40px;top:826.16px;overflow:visible;" width="6.30" height="10.20" viewBox="0 0 6.3 10.2"><path d="M.900 .900 5.400 5.100 .900 9.300" fill="none" stroke="#4d4649" stroke-width="1.700" stroke-linecap="round" stroke-linejoin="round"/></svg>
<svg style="position:absolute;left:34.40px;top:818.26px;overflow:visible;" width="26.00" height="26.00" viewBox="0 0 26 26"><circle cx="2.6" cy="17.4" r="1.9" fill="#5a6b8d" stroke="#e1cfe3" stroke-width=".500"/><circle cx="24.6" cy="18.0" r="1.4" fill="#5a6b8d" stroke="#e1cfe3" stroke-width=".500"/><circle cx="10.5" cy="17.7" r="2.4" fill="#5a6b8d" stroke="#e1cfe3" stroke-width=".500"/><circle cx="15.9" cy="17.7" r="2.4" fill="#5a6b8d" stroke="#e1cfe3" stroke-width=".500"/><circle cx="7.0" cy="15.5" r="3.7" fill="#5a6b8d" stroke="#e1cfe3" stroke-width=".500"/><circle cx="19.6" cy="15.7" r="3.7" fill="#5a6b8d" stroke="#e1cfe3" stroke-width=".500"/><circle cx="8.6" cy="9.4" r="2.2" fill="#5a6b8d" stroke="#e1cfe3" stroke-width=".500"/><circle cx="13.2" cy="11.6" r="5.3" fill="#5a6b8d" stroke="#e1cfe3" stroke-width=".500"/></svg>
<svg style="position:absolute;left:22.40px;top:862.70px;overflow:visible;" width="6.30" height="10.20" viewBox="0 0 6.3 10.2"><path d="M.900 .900 5.400 5.100 .900 9.300" fill="none" stroke="#4d4649" stroke-width="1.700" stroke-linecap="round" stroke-linejoin="round"/></svg>
<svg style="position:absolute;left:34.40px;top:854.80px;overflow:visible;" width="26.00" height="26.00" viewBox="0 0 26 26"><circle cx="2.6" cy="17.4" r="1.9" fill="#5a6b8d" stroke="#e1cfe3" stroke-width=".500"/><circle cx="24.6" cy="18.0" r="1.4" fill="#5a6b8d" stroke="#e1cfe3" stroke-width=".500"/><circle cx="10.5" cy="17.7" r="2.4" fill="#5a6b8d" stroke="#e1cfe3" stroke-width=".500"/><circle cx="15.9" cy="17.7" r="2.4" fill="#5a6b8d" stroke="#e1cfe3" stroke-width=".500"/><circle cx="7.0" cy="15.5" r="3.7" fill="#5a6b8d" stroke="#e1cfe3" stroke-width=".500"/><circle cx="19.6" cy="15.7" r="3.7" fill="#5a6b8d" stroke="#e1cfe3" stroke-width=".500"/><circle cx="8.6" cy="9.4" r="2.2" fill="#5a6b8d" stroke="#e1cfe3" stroke-width=".500"/><circle cx="13.2" cy="11.6" r="5.3" fill="#5a6b8d" stroke="#e1cfe3" stroke-width=".500"/></svg>
<svg style="position:absolute;left:22.40px;top:899.24px;overflow:visible;" width="6.30" height="10.20" viewBox="0 0 6.3 10.2"><path d="M.900 .900 5.400 5.100 .900 9.300" fill="none" stroke="#4d4649" stroke-width="1.700" stroke-linecap="round" stroke-linejoin="round"/></svg>
<svg style="position:absolute;left:34.40px;top:891.34px;overflow:visible;" width="26.00" height="26.00" viewBox="0 0 26 26"><rect x="4.500" y="5.1" width="17" height="4.600" rx=".400" fill="#efaf46"/><rect x="17" y="6.8" width="2.700" height="1.100" fill="#fbe4b4"/><rect x="4.500" y="10.7" width="17" height="4.600" rx=".400" fill="#efaf46"/><rect x="17" y="12.4" width="2.700" height="1.100" fill="#fbe4b4"/><rect x="4.500" y="16.3" width="17" height="4.600" rx=".400" fill="#efaf46"/><rect x="17" y="18.0" width="2.700" height="1.100" fill="#fbe4b4"/></svg>
<svg style="position:absolute;left:22.40px;top:935.78px;overflow:visible;" width="6.30" height="10.20" viewBox="0 0 6.3 10.2"><path d="M.900 .900 5.400 5.100 .900 9.300" fill="none" stroke="#4d4649" stroke-width="1.700" stroke-linecap="round" stroke-linejoin="round"/></svg>
<svg style="position:absolute;left:34.40px;top:927.88px;overflow:visible;" width="26.00" height="26.00" viewBox="0 0 26 26"><rect x="4.500" y="5.1" width="17" height="4.600" rx=".400" fill="#efaf46"/><rect x="17" y="6.8" width="2.700" height="1.100" fill="#fbe4b4"/><rect x="4.500" y="10.7" width="17" height="4.600" rx=".400" fill="#efaf46"/><rect x="17" y="12.4" width="2.700" height="1.100" fill="#fbe4b4"/><rect x="4.500" y="16.3" width="17" height="4.600" rx=".400" fill="#efaf46"/><rect x="17" y="18.0" width="2.700" height="1.100" fill="#fbe4b4"/></svg>
<svg style="position:absolute;left:22.40px;top:972.32px;overflow:visible;" width="6.30" height="10.20" viewBox="0 0 6.3 10.2"><path d="M.900 .900 5.400 5.100 .900 9.300" fill="none" stroke="#4d4649" stroke-width="1.700" stroke-linecap="round" stroke-linejoin="round"/></svg>
<svg style="position:absolute;left:34.40px;top:964.42px;overflow:visible;" width="26.00" height="26.00" viewBox="0 0 26 26"><g fill="none" stroke="#60b2e2" stroke-width="1.500"><circle cx="12.500" cy="12.800" r="10.300"/><ellipse cx="12.500" cy="12.800" rx="4.900" ry="10.300"/><path d="M12.500 2.500v20.600M2.200 12.800h20.600M3.700 7.600h17.600M3.700 18h17.600"/></g><rect x="16.900" y="14" width="10" height="12.300" fill="#e3cfe1"/><rect x="18.200" y="18.400" width="7.200" height="5.800" rx=".800" fill="#6dbdea"/><path d="M19.700 18.600v-1.300a2.100 2.100 0 0 1 4.200 0v1.300" fill="none" stroke="#6dbdea" stroke-width="1.300"/></svg>
<svg style="position:absolute;left:22.40px;top:1008.86px;overflow:visible;" width="6.30" height="10.20" viewBox="0 0 6.3 10.2"><path d="M.900 .900 5.400 5.100 .900 9.300" fill="none" stroke="#4d4649" stroke-width="1.700" stroke-linecap="round" stroke-linejoin="round"/></svg>
<svg style="position:absolute;left:34.40px;top:1000.96px;overflow:visible;" width="26.00" height="26.00" viewBox="0 0 26 26"><path d="M2.200 6.300 11.400 4.800V12.400H2.200z" fill="#6cc5e8"/><path d="M12.500 4.600 23.800 2.500V12.400H12.500z" fill="#6cc5e8"/><path d="M2.200 13.500H11.400V21.200L2.200 19.700z" fill="#6cc5e8"/><path d="M12.500 13.500H23.800V23.700L12.500 21.500z" fill="#6cc5e8"/></svg>
<div class="" style="position:absolute;left:68.0px;top:69.0px;width:125.0px;height:964.0px;overflow:hidden"><span id="t30" class="t " style="left:2.8px;top:59.4px;font-size:17px;color:#3d383b;letter-spacing:0.039px;">iCloud</span><span id="t31" class="t " style="left:2.8px;top:95.9px;font-size:17px;color:#3d383b;letter-spacing:0.179px;">Synced</span><span id="t32" class="t " style="left:2.8px;top:132.5px;font-size:17px;color:#3d383b;">Nearby File Transfer</span><span id="t33" class="t " style="left:2.8px;top:169.0px;font-size:17px;color:#3d383b;letter-spacing:0.278px;">stevenzhang</span><span id="t34" class="t " style="left:2.8px;top:205.6px;font-size:17px;color:#3d383b;letter-spacing:0.320px;">Desktop</span><span id="t35" class="t " style="left:2.8px;top:242.1px;font-size:17px;color:#3d383b;letter-spacing:0.077px;">Work</span><span id="t36" class="t " style="left:2.8px;top:278.6px;font-size:17px;color:#3d383b;letter-spacing:0.248px;">Downloads</span><span id="t38" class="t " style="left:2.8px;top:351.7px;font-size:17px;color:#3d383b;letter-spacing:0.022px;">WIN2016</span><span id="t39" class="t " style="left:2.8px;top:388.3px;font-size:17px;color:#3d383b;letter-spacing:-0.250px;">DESKTOP-JANE</span><span id="t40" class="t " style="left:2.8px;top:424.8px;font-size:17px;color:#3d383b;letter-spacing:0.580px;">RT-AC86U-5900</span><span id="t41" class="t " style="left:2.8px;top:461.3px;font-size:17px;color:#3d383b;letter-spacing:-0.364px;">192.168.2.11</span><span id="t42" class="t " style="left:2.8px;top:497.9px;font-size:17px;color:#3d383b;letter-spacing:-0.364px;">192.168.2.11</span><span id="t43" class="t " style="left:2.8px;top:534.4px;font-size:17px;color:#3d383b;letter-spacing:-0.364px;">192.168.2.11</span><span id="t44" class="t " style="left:2.8px;top:571.0px;font-size:17px;color:#3d383b;letter-spacing:-0.371px;">Z STV</span><span id="t45" class="t " style="left:2.8px;top:607.5px;font-size:17px;color:#3d383b;letter-spacing:0.177px;">Steven Zhang</span><span id="t46" class="t " style="left:2.8px;top:644.0px;font-size:17px;color:#3d383b;">skyjos.ios@gmail.com</span><span id="t47" class="t " style="left:2.8px;top:680.6px;font-size:17px;color:#3d383b;letter-spacing:0.150px;">steven.jane.zhang</span><span id="t48" class="t " style="left:2.8px;top:717.1px;font-size:17px;color:#3d383b;letter-spacing:0.650px;">stevens-macbook</span><span id="t49" class="t " style="left:2.8px;top:753.7px;font-size:17px;color:#3d383b;letter-spacing:0.350px;">demo.owncloud.org</span><span id="t50" class="t " style="left:2.8px;top:790.2px;font-size:17px;color:#3d383b;letter-spacing:0.397px;">Next could</span><span id="t51" class="t " style="left:2.8px;top:826.7px;font-size:17px;color:#3d383b;letter-spacing:-0.640px;">SKYJOSEPSON</span><span id="t52" class="t " style="left:2.8px;top:863.3px;font-size:17px;color:#3d383b;letter-spacing:-0.397px;">SYNOVM</span><span id="t53" class="t " style="left:2.8px;top:899.8px;font-size:17px;color:#3d383b;letter-spacing:-0.002px;">192.168.2.186</span><span id="t54" class="t " style="left:2.8px;top:936.4px;font-size:17px;color:#3d383b;letter-spacing:-0.427px;">STEVENWIN10</span></div>
<div class="" style="position:absolute;left:236.0px;top:147.8px;width:1451.0px;height:885.2px;background:repeating-linear-gradient(to bottom,#fff 0,#fff 32.60px,#f5f5f5 32.60px,#f5f5f5 65.20px)"></div>
<div class="" style="position:absolute;left:236.0px;top:110.6px;width:1451.0px;height:36.4px;background:#fff;border-bottom:1px solid #e3e3e3;box-sizing:border-box"></div>
<div class="" style="position:absolute;left:768.5px;top:119.0px;width:1.0px;height:20.5px;background:#dedede"></div>
<div class="" style="position:absolute;left:1007.2px;top:119.0px;width:1.0px;height:20.5px;background:#dedede"></div>
<div class="" style="position:absolute;left:1153.4px;top:119.0px;width:1.0px;height:20.5px;background:#dedede"></div>
<span id="t55" class="t " style="left:248.2px;top:119.8px;font-size:14.3px;color:#262626;letter-spacing:-0.047px;">Name</span>
<span id="t56" class="t " style="left:773.8px;top:119.8px;font-size:14.3px;color:#1d1d1d;font-weight:700;letter-spacing:0.414px;">Date Modified</span>
<span id="t57" class="t " style="left:1012.4px;top:119.8px;font-size:14.3px;color:#262626;letter-spacing:-0.072px;">Size</span>
<span id="t58" class="t " style="left:1158.6px;top:119.8px;font-size:14.3px;color:#262626;letter-spacing:0.299px;">Type</span>
<svg style="position:absolute;left:988.80px;top:126.60px;overflow:visible;" width="8.90" height="5.30" viewBox="0 0 8.9 5.3"><path d="M.700 .700 4.450 4.500 8.200 .700" fill="none" stroke="#555" stroke-width="1.200" stroke-linecap="round" stroke-linejoin="round"/></svg>
<div class="" style="position:absolute;left:236.0px;top:245.3px;width:1451.0px;height:32.8px;background:#dcdcdc"></div>
<svg style="position:absolute;left:264.80px;top:149.20px;overflow:hidden" width="30" height="30" viewBox="0 0 100 100" preserveAspectRatio="none"><defs><linearGradient id="h1a" x1="0" y1="0" x2="0" y2="1"><stop offset="0" stop-color="#6a4658"/><stop offset="0.12" stop-color="#c4605a"/><stop offset="0.22" stop-color="#6c5464"/><stop offset="0.3" stop-color="#d86a50"/><stop offset="0.42" stop-color="#f0b088"/><stop offset="0.5" stop-color="#c08068"/><stop offset="0.58" stop-color="#f09a48"/><stop offset="0.615" stop-color="#e87838"/><stop offset="0.625" stop-color="#3a2020"/><stop offset="0.65" stop-color="#e08048"/><stop offset="0.74" stop-color="#d87048"/><stop offset="0.86" stop-color="#7a3428"/><stop offset="1" stop-color="#2a1414"/></linearGradient><filter id="h1b" x="-30%" y="-30%" width="160%" height="160%"><feGaussianBlur stdDeviation="2.2"/></filter></defs><rect width="100" height="100" fill="url(#h1a)"/><g filter="url(#h1b)"><ellipse cx="30" cy="24" rx="32" ry="6" fill="#45465e" fill-opacity=".9"/><ellipse cx="84" cy="42" rx="20" ry="4" fill="#5a4650" fill-opacity=".85"/><ellipse cx="70" cy="12" rx="30" ry="5" fill="#e8806a" fill-opacity=".7"/><ellipse cx="40" cy="38" rx="34" ry="4" fill="#f8c8a0" fill-opacity=".7"/></g><path d="M25 69l4 10 14 8 12 5 10 6 35 2V88l-12-4-16-3-10-1-6-6-2-4-12-1-10-2z" fill="#0c0606"/></svg>
<span id="t59" class="t " style="left:300.4px;top:156.1px;font-size:17px;color:#262626;letter-spacing:0.055px;">sample_audio_12.mp3</span>
<span id="t60" class="t " style="left:774.0px;top:156.1px;font-size:17px;color:#262626;letter-spacing:0.019px;">Nov 14, 2017 at 1:40 PM</span>
<span id="t61" class="t " style="left:1012.4px;top:156.1px;font-size:17px;color:#262626;">822.31 KB</span>
<span id="t62" class="t " style="left:1158.3px;top:156.1px;font-size:17px;color:#262626;letter-spacing:0.215px;">MP3 audio</span>
<svg style="position:absolute;left:264.80px;top:181.80px;overflow:hidden" width="30" height="30" viewBox="0 0 100 100" preserveAspectRatio="none"><defs><linearGradient id="h2a" x1="0" y1="0" x2="0" y2="1"><stop offset="0" stop-color="#7e98bc"/><stop offset="0.2" stop-color="#a8c0d8"/><stop offset="0.36" stop-color="#c8d8e4"/><stop offset="0.55" stop-color="#e8eef0"/><stop offset="0.75" stop-color="#b8c4dc"/><stop offset="1" stop-color="#7088bc"/></linearGradient><filter id="h2b" x="-30%" y="-30%" width="160%" height="160%"><feGaussianBlur stdDeviation="1.8"/></filter></defs><rect width="100" height="100" fill="url(#h2a)"/><path d="M40 30 62 14 100 34V40H30z" fill="#8aaac8" fill-opacity=".55"/><g filter="url(#h2b)"><path d="M0 42c8-6 22-8 32-4 10 3 20 6 18 12-6 8-22 12-34 16L0 70z" fill="#356e2c"/><path d="M100 40c-10 0-22 4-28 12-4 8 6 12 14 14l14 2z" fill="#356e2c"/><path d="M0 64c12-2 26-8 40-14-10 12-24 20-40 26z" fill="#5a8a58" fill-opacity=".5"/><path d="M76 68h24v18c-12 0-22-6-24-18z" fill="#5a8a68" fill-opacity=".45"/><ellipse cx="56" cy="62" rx="12" ry="22" fill="#f4f8fa" fill-opacity=".75"/></g></svg>
<span id="t63" class="t " style="left:300.4px;top:188.7px;font-size:17px;color:#262626;letter-spacing:0.020px;">sample_audio_11.mp3</span>
<span id="t64" class="t " style="left:774.0px;top:188.7px;font-size:17px;color:#262626;letter-spacing:0.019px;">Nov 14, 2017 at 1:40 PM</span>
<span id="t65" class="t " style="left:1012.4px;top:188.7px;font-size:17px;color:#262626;">852.42 KB</span>
<span id="t66" class="t " style="left:1158.3px;top:188.7px;font-size:17px;color:#262626;letter-spacing:0.215px;">MP3 audio</span>
<svg style="position:absolute;left:264.80px;top:214.40px;overflow:hidden" width="30" height="30" viewBox="0 0 100 100" preserveAspectRatio="none"><defs><linearGradient id="h3a" x1="0" y1="0" x2="-0.12" y2="1"><stop offset="0" stop-color="#6e4718"/><stop offset="0.14" stop-color="#8f6426"/><stop offset="0.2" stop-color="#a87c3a"/><stop offset="0.24" stop-color="#8a5e24"/><stop offset="0.36" stop-color="#a67a36"/><stop offset="0.5" stop-color="#8a5c22"/><stop offset="0.62" stop-color="#75491a"/><stop offset="0.8" stop-color="#5c3914"/><stop offset="1" stop-color="#38210b"/></linearGradient><filter id="h3b" x="-30%" y="-30%" width="160%" height="160%"><feGaussianBlur stdDeviation="2.4"/></filter></defs><rect width="100" height="100" fill="url(#h3a)"/><g filter="url(#h3b)"><path d="M-5 50 105 26V38L-5 66z" fill="#f0cf80"/><path d="M-5 56 105 34V39L-5 64z" fill="#fbe6a8" fill-opacity=".8"/><path d="M-5 66 105 44V56L-5 80z" fill="#5a3812" fill-opacity=".75"/></g><path d="M30 52c8-3 16-3 26-2s28 3 44 4v4c-14-1-32-3-44-5s-18-1-26 1z" fill="#2a1808" fill-opacity=".9"/><rect width="100" height="100" fill="none" stroke="#2a1808" stroke-opacity=".45" stroke-width="5"/></svg>
<span id="t67" class="t " style="left:300.4px;top:221.3px;font-size:17px;color:#262626;letter-spacing:0.077px;">sample_audio_10.mp3</span>
<span id="t68" class="t " style="left:774.0px;top:221.3px;font-size:17px;color:#262626;letter-spacing:0.019px;">Nov 14, 2017 at 1:39 PM</span>
<span id="t69" class="t " style="left:1012.4px;top:221.3px;font-size:17px;color:#262626;">827.37 KB</span>
<span id="t70" class="t " style="left:1158.3px;top:221.3px;font-size:17px;color:#262626;letter-spacing:0.215px;">MP3 audio</span>
<svg style="position:absolute;left:264.80px;top:247.00px;overflow:hidden" width="30" height="30" viewBox="0 0 100 100" preserveAspectRatio="none"><defs><linearGradient id="h4a" x1="0" y1="0" x2="0" y2="1"><stop offset="0" stop-color="#86b4a0"/><stop offset="0.3" stop-color="#9cc6b0"/><stop offset="0.7" stop-color="#a8cfba"/><stop offset="1" stop-color="#b4d4c4"/></linearGradient></defs><rect width="100" height="100" fill="url(#h4a)"/><path d="M22 66c10 10 30 10 44 4 8-3 12-7 14-12-16 8-40 12-58 8z" fill="#6a9c80" fill-opacity=".7"/><path d="M21 48c14-6 40-12 60-8-2 12-10 18-22 20-10 2-20 4-26 4-6-4-10-10-12-16z" fill="#e4dc90"/><path d="M21 48c14-6 40-12 60-8l-4 4c-16-1-36 2-52 7z" fill="#f6f2cc"/><path d="M28 56c16 2 34-2 50-12-4 10-10 14-20 16-10 2-18 4-24 4z" fill="#b0a858"/><path d="M72 36l4 2 2 8-4-3z" fill="#3a3a34"/><ellipse cx="97" cy="55" rx="9" ry="8" fill="#5a5a54"/></svg>
<span id="t71" class="t " style="left:300.4px;top:253.9px;font-size:17px;color:#262626;letter-spacing:0.267px;">sample_audio_6.mp3</span>
<span id="t72" class="t " style="left:774.0px;top:253.9px;font-size:17px;color:#262626;letter-spacing:0.019px;">Nov 14, 2017 at 1:39 PM</span>
<span id="t73" class="t " style="left:1012.4px;top:253.9px;font-size:17px;color:#262626;">799.52 KB</span>
<span id="t74" class="t " style="left:1158.3px;top:253.9px;font-size:17px;color:#262626;letter-spacing:0.215px;">MP3 audio</span>
<svg style="position:absolute;left:264.80px;top:279.60px;overflow:hidden" width="30" height="30" viewBox="0 0 100 100" preserveAspectRatio="none"><defs><linearGradient id="h5a" x1="0" y1="0" x2="-0.04" y2="1"><stop offset="0" stop-color="#4a7cc2"/><stop offset="0.12" stop-color="#5888c0"/><stop offset="0.28" stop-color="#86a0a8"/><stop offset="0.42" stop-color="#c0b490"/><stop offset="0.52" stop-color="#cf9e6c"/><stop offset="0.64" stop-color="#d8935a"/><stop offset="0.66" stop-color="#f4d9a4"/><stop offset="0.7" stop-color="#e0a060"/><stop offset="0.84" stop-color="#c97c48"/><stop offset="0.88" stop-color="#e8ac6c"/><stop offset="1" stop-color="#d88f54"/></linearGradient></defs><rect width="100" height="100" fill="url(#h5a)"/></svg>
<span id="t75" class="t " style="left:300.4px;top:286.5px;font-size:17px;color:#262626;letter-spacing:0.255px;">sample_audio_5.mp3</span>
<span id="t76" class="t " style="left:774.0px;top:286.5px;font-size:17px;color:#262626;letter-spacing:0.019px;">Nov 14, 2017 at 1:39 PM</span>
<span id="t77" class="t " style="left:1012.4px;top:286.5px;font-size:17px;color:#262626;">791.66 KB</span>
<span id="t78" class="t " style="left:1158.3px;top:286.5px;font-size:17px;color:#262626;letter-spacing:0.215px;">MP3 audio</span>
<svg style="position:absolute;left:264.80px;top:312.20px;overflow:hidden" width="30" height="30" viewBox="0 0 100 100" preserveAspectRatio="none"><defs><linearGradient id="h6a" x1="0" y1="0" x2="0" y2="1"><stop offset="0" stop-color="#5e8cc6"/><stop offset="0.2" stop-color="#8aaed8"/><stop offset="0.36" stop-color="#c8c8e0"/><stop offset="0.44" stop-color="#eee0e6"/><stop offset="0.47" stop-color="#3460a8"/><stop offset="0.5" stop-color="#7898cc"/><stop offset="0.6" stop-color="#6c94d0"/><stop offset="0.8" stop-color="#4a7cc8"/><stop offset="1" stop-color="#2f62b8"/></linearGradient></defs><rect width="100" height="100" fill="url(#h6a)"/><path d="M0 40h14l8 3 14 2 14 2H0z" fill="#2c4f96"/></svg>
<span id="t79" class="t " style="left:300.4px;top:319.1px;font-size:17px;color:#262626;letter-spacing:0.285px;">sample_audio_2.mp3</span>
<span id="t80" class="t " style="left:774.0px;top:319.1px;font-size:17px;color:#262626;letter-spacing:0.019px;">Nov 14, 2017 at 1:39 PM</span>
<span id="t81" class="t " style="left:1012.4px;top:319.1px;font-size:17px;color:#262626;">789.00 KB</span>
<span id="t82" class="t " style="left:1158.3px;top:319.1px;font-size:17px;color:#262626;letter-spacing:0.215px;">MP3 audio</span>
<svg style="position:absolute;left:264.80px;top:344.80px;overflow:hidden" width="30" height="30" viewBox="0 0 100 100" preserveAspectRatio="none"><defs><linearGradient id="h7a" x1="0" y1="0" x2="0" y2="1"><stop offset="0" stop-color="#5a8cc8"/><stop offset="0.3" stop-color="#8ab0dc"/><stop offset="0.55" stop-color="#d8e4f0"/><stop offset="0.7" stop-color="#5a7ca0"/><stop offset="0.85" stop-color="#b8cce0"/><stop offset="1" stop-color="#4a6c90"/></linearGradient><filter id="h7b" x="-30%" y="-30%" width="160%" height="160%"><feGaussianBlur stdDeviation="1.3"/></filter></defs><rect width="100" height="100" fill="url(#h7a)"/><g filter="url(#h7b)"><path d="M0 46 14 28l10 10 16-22 12 14 14-20 16 12 18-22v70H0z" fill="#e4ecf4"/><path d="M0 60 18 44l14 10 14-14 16 12 16-16 22 10v34H0z" fill="#5c80a8"/><path d="M0 74h100v10H0z" fill="#dfe8f0"/><path d="M0 84h100v16H0z" fill="#4a6888"/><path d="M6 66 30 60l20 8 24-8 26 6v8H0z" fill="#2c4460" fill-opacity=".7"/></g></svg>
<span id="t83" class="t " style="left:300.4px;top:351.7px;font-size:17px;color:#262626;letter-spacing:0.267px;">sample_audio_9.mp3</span>
<span id="t84" class="t " style="left:774.0px;top:351.7px;font-size:17px;color:#262626;letter-spacing:0.019px;">Nov 14, 2017 at 1:36 PM</span>
<span id="t85" class="t " style="left:1012.4px;top:351.7px;font-size:17px;color:#262626;">837.99 KB</span>
<span id="t86" class="t " style="left:1158.3px;top:351.7px;font-size:17px;color:#262626;letter-spacing:0.215px;">MP3 audio</span>
<svg style="position:absolute;left:264.80px;top:377.40px;overflow:hidden" width="30" height="30" viewBox="0 0 100 100" preserveAspectRatio="none"><defs><linearGradient id="h8a" x1="0" y1="0" x2="0" y2="1"><stop offset="0" stop-color="#8aa8cc"/><stop offset="0.2" stop-color="#c4d4e4"/><stop offset="0.45" stop-color="#e8ecf0"/><stop offset="0.56" stop-color="#a8b8c4"/><stop offset="0.62" stop-color="#c8c4b4"/><stop offset="0.8" stop-color="#d8d4c4"/><stop offset="1" stop-color="#c0bcac"/></linearGradient></defs><rect width="100" height="100" fill="url(#h8a)"/><ellipse cx="40" cy="24" rx="34" ry="14" fill="#f4f6f8"/><path d="M30 56c14-6 30-16 50-20l20-6v30l-40 2z" fill="#3e4c34"/><path d="M0 60c30-4 60-4 100 0v6H0z" fill="#8a9ca8"/></svg>
<span id="t87" class="t " style="left:300.4px;top:384.3px;font-size:17px;color:#262626;letter-spacing:0.285px;">sample_audio_8.mp3</span>
<span id="t88" class="t " style="left:774.0px;top:384.3px;font-size:17px;color:#262626;letter-spacing:0.019px;">Nov 14, 2017 at 1:36 PM</span>
<span id="t89" class="t " style="left:1012.4px;top:384.3px;font-size:17px;color:#262626;">885.65 KB</span>
<span id="t90" class="t " style="left:1158.3px;top:384.3px;font-size:17px;color:#262626;letter-spacing:0.215px;">MP3 audio</span>
<svg style="position:absolute;left:264.80px;top:410.00px;overflow:hidden" width="30" height="30" viewBox="0 0 100 100" preserveAspectRatio="none"><defs><linearGradient id="h9a" x1="0" y1="0" x2="0" y2="1"><stop offset="0" stop-color="#8a9cb0"/><stop offset="0.18" stop-color="#d4ccb0"/><stop offset="0.3" stop-color="#98a4ac"/><stop offset="0.36" stop-color="#3c4444"/><stop offset="0.44" stop-color="#7c94a8"/><stop offset="0.52" stop-color="#d8e0e4"/><stop offset="0.6" stop-color="#8ca0ac"/><stop offset="0.72" stop-color="#b0a478"/><stop offset="0.88" stop-color="#9c9060"/><stop offset="1" stop-color="#7c7448"/></linearGradient></defs><rect width="100" height="100" fill="url(#h9a)"/><path d="M0 30c20-4 40 2 60 0s30-4 40-2v10H0z" fill="#343c3c"/></svg>
<span id="t91" class="t " style="left:300.4px;top:416.9px;font-size:17px;color:#262626;letter-spacing:0.190px;">sample_audio_7.mp3</span>
<span id="t92" class="t " style="left:774.0px;top:416.9px;font-size:17px;color:#262626;letter-spacing:0.019px;">Nov 14, 2017 at 1:35 PM</span>
<span id="t93" class="t " style="left:1012.4px;top:416.9px;font-size:17px;color:#262626;">951.12 KB</span>
<span id="t94" class="t " style="left:1158.3px;top:416.9px;font-size:17px;color:#262626;letter-spacing:0.215px;">MP3 audio</span>
<svg style="position:absolute;left:264.80px;top:442.60px;overflow:hidden" width="30" height="30" viewBox="0 0 100 100" preserveAspectRatio="none"><defs><linearGradient id="h10a" x1="0" y1="0" x2="0" y2="1"><stop offset="0" stop-color="#4a5a84"/><stop offset="0.16" stop-color="#c89860"/><stop offset="0.3" stop-color="#5a6c8c"/><stop offset="0.44" stop-color="#48607c"/><stop offset="0.52" stop-color="#c8c4b0"/><stop offset="0.62" stop-color="#8c8c78"/><stop offset="0.74" stop-color="#d0b880"/><stop offset="0.88" stop-color="#b89858"/><stop offset="1" stop-color="#d8a860"/></linearGradient></defs><rect width="100" height="100" fill="url(#h10a)"/><path d="M20 44c10-14 30-20 50-10l30 10v6H0z" fill="#3c5070"/><ellipse cx="20" cy="14" rx="22" ry="8" fill="#e0b070" fill-opacity=".8"/><ellipse cx="84" cy="12" rx="18" ry="7" fill="#d8a468" fill-opacity=".8"/></svg>
<span id="t95" class="t " style="left:300.4px;top:449.5px;font-size:17px;color:#262626;letter-spacing:0.273px;">sample_audio_4.mp3</span>
<span id="t96" class="t " style="left:774.0px;top:449.5px;font-size:17px;color:#262626;letter-spacing:0.019px;">Nov 14, 2017 at 1:35 PM</span>
<span id="t97" class="t " style="left:1012.4px;top:449.5px;font-size:17px;color:#262626;">904.34 KB</span>
<span id="t98" class="t " style="left:1158.3px;top:449.5px;font-size:17px;color:#262626;letter-spacing:0.215px;">MP3 audio</span>
<svg style="position:absolute;left:264.80px;top:475.20px;overflow:hidden" width="30" height="30" viewBox="0 0 100 100" preserveAspectRatio="none"><defs><linearGradient id="h11a" x1="0" y1="0" x2="0" y2="1"><stop offset="0" stop-color="#fbf4ee"/><stop offset="0.12" stop-color="#f4d8c0"/><stop offset="0.22" stop-color="#e0a888"/><stop offset="0.3" stop-color="#8c7478"/><stop offset="0.4" stop-color="#5c5c68"/><stop offset="0.6" stop-color="#484c58"/><stop offset="0.76" stop-color="#2c3038"/><stop offset="0.79" stop-color="#060606"/><stop offset="1" stop-color="#000"/></linearGradient></defs><rect width="100" height="100" fill="url(#h11a)"/><circle cx="50" cy="22" r="6" fill="#fff4e0"/><circle cx="50" cy="22" r="12" fill="#ffd8b0" fill-opacity=".4"/></svg>
<span id="t99" class="t " style="left:300.4px;top:482.1px;font-size:17px;color:#262626;letter-spacing:0.267px;">sample_audio_3.mp3</span>
<span id="t100" class="t " style="left:774.0px;top:482.1px;font-size:17px;color:#262626;letter-spacing:0.019px;">Nov 14, 2017 at 1:35 PM</span>
<span id="t101" class="t " style="left:1012.4px;top:482.1px;font-size:17px;color:#262626;">797.78 KB</span>
<span id="t102" class="t " style="left:1158.3px;top:482.1px;font-size:17px;color:#262626;letter-spacing:0.215px;">MP3 audio</span>
<svg style="position:absolute;left:264.80px;top:507.80px;overflow:hidden" width="30" height="30" viewBox="0 0 100 100" preserveAspectRatio="none"><defs><linearGradient id="h12a" x1="0" y1="0" x2="0" y2="1"><stop offset="0" stop-color="#dce8f4"/><stop offset="0.1" stop-color="#8cb4e4"/><stop offset="0.3" stop-color="#4c84d0"/><stop offset="0.5" stop-color="#3c6cb8"/><stop offset="0.7" stop-color="#34588c"/><stop offset="1" stop-color="#243c5c"/></linearGradient></defs><rect width="100" height="100" fill="url(#h12a)"/><ellipse cx="42" cy="6" rx="40" ry="9" fill="#f4f8fc"/><path d="M100 42 76 56 54 66 30 78 0 84v16h100z" fill="#4c6c3c"/><path d="M100 60 70 76 40 88 0 92v8h100z" fill="#30482c"/><path d="M0 80l30-4 14 6-20 8-24 4z" fill="#7c9c54" fill-opacity=".8"/></svg>
<span id="t103" class="t " style="left:300.4px;top:514.7px;font-size:17px;color:#262626;letter-spacing:0.061px;">sample_audio_1.mp3</span>
<span id="t104" class="t " style="left:774.0px;top:514.7px;font-size:17px;color:#262626;letter-spacing:0.019px;">Nov 14, 2017 at 1:35 PM</span>
<span id="t105" class="t " style="left:1012.4px;top:514.7px;font-size:17px;color:#262626;">890.35 KB</span>
<span id="t106" class="t " style="left:1158.3px;top:514.7px;font-size:17px;color:#262626;letter-spacing:0.215px;">MP3 audio</span>
<svg style="position:absolute;left:264.80px;top:540.40px;overflow:hidden" width="30" height="30" viewBox="0 0 100 100" preserveAspectRatio="none"><rect width="100" height="100" fill="#1c1a1c"/><rect x="0" y="0" width="100" height="4" fill="#7a2c34"/><rect x="28" y="12" width="44" height="4" fill="#c8c0c0"/><rect x="36" y="20" width="28" height="2.500" fill="#8c8888"/><rect x="32" y="27" width="36" height="2.500" fill="#a8a0a0"/><rect x="40" y="34" width="20" height="2" fill="#787474"/><rect x="26" y="44" width="48" height="48" fill="#e8dcc0"/><rect x="30" y="48" width="12" height="12" fill="#d8c060"/><rect x="43.5" y="48" width="12" height="12" fill="#c85c48"/><rect x="57" y="48" width="12" height="12" fill="#5c84b8"/><rect x="30" y="61.5" width="12" height="12" fill="#d8d0b8"/><rect x="43.5" y="61.5" width="12" height="12" fill="#a85478"/><rect x="57" y="61.5" width="12" height="12" fill="#e0b050"/><rect x="30" y="75" width="12" height="12" fill="#6c9c6c"/><rect x="43.5" y="75" width="12" height="12" fill="#c8c8d8"/><rect x="57" y="75" width="12" height="12" fill="#b87840"/></svg>
<span id="t107" class="t " style="left:300.4px;top:547.3px;font-size:17px;color:#262626;letter-spacing:0.221px;">El Sombrero de tres picos.wma</span>
<span id="t108" class="t " style="left:774.0px;top:547.3px;font-size:17px;color:#262626;letter-spacing:0.153px;">May 19, 2015 at 10:05 AM</span>
<span id="t109" class="t " style="left:1012.4px;top:547.3px;font-size:17px;color:#262626;">5.90 MB</span>
<span id="t110" class="t " style="left:1158.3px;top:547.3px;font-size:17px;color:#262626;letter-spacing:0.330px;">Windows Media Audio</span></div></div>
<div id="pop"><div id="popin"><div class="" style="position:absolute;left:214.0px;top:0.0px;width:203.0px;height:650.0px;background:linear-gradient(to bottom,#9fc2ea 0,#a6c7ec 250px,#bdd2ee 300px,#dbe1f0 350px,#ebe8e6 415px,#efe0bc 465px,#edd7a4 510px,#ecd0a6 570px,#e8c2b0 620px,#e6bbae 650px);-webkit-mask-image:linear-gradient(93deg,transparent 14%,rgba(0,0,0,.08) 32%,rgba(0,0,0,.40) 52%,rgba(0,0,0,.82) 72%,#000 90%);mask-image:linear-gradient(93deg,transparent 14%,rgba(0,0,0,.08) 32%,rgba(0,0,0,.40) 52%,rgba(0,0,0,.82) 72%,#000 90%)"></div>
<div class="" style="position:absolute;left:0.0px;top:0.0px;width:417.0px;height:455.0px;overflow:hidden"><svg style="position:absolute;left:37.20px;top:20.10px;overflow:hidden" width="65.4" height="65.4" viewBox="0 0 100 100" preserveAspectRatio="none"><defs><linearGradient id="h14a" x1="0" y1="0" x2="0" y2="1"><stop offset="0" stop-color="#6a4658"/><stop offset="0.12" stop-color="#c4605a"/><stop offset="0.22" stop-color="#6c5464"/><stop offset="0.3" stop-color="#d86a50"/><stop offset="0.42" stop-color="#f0b088"/><stop offset="0.5" stop-color="#c08068"/><stop offset="0.58" stop-color="#f09a48"/><stop offset="0.615" stop-color="#e87838"/><stop offset="0.625" stop-color="#3a2020"/><stop offset="0.65" stop-color="#e08048"/><stop offset="0.74" stop-color="#d87048"/><stop offset="0.86" stop-color="#7a3428"/><stop offset="1" stop-color="#2a1414"/></linearGradient><filter id="h14b" x="-30%" y="-30%" width="160%" height="160%"><feGaussianBlur stdDeviation="2.2"/></filter></defs><rect width="100" height="100" fill="url(#h14a)"/><g filter="url(#h14b)"><ellipse cx="30" cy="24" rx="32" ry="6" fill="#45465e" fill-opacity=".9"/><ellipse cx="84" cy="42" rx="20" ry="4" fill="#5a4650" fill-opacity=".85"/><ellipse cx="70" cy="12" rx="30" ry="5" fill="#e8806a" fill-opacity=".7"/><ellipse cx="40" cy="38" rx="34" ry="4" fill="#f8c8a0" fill-opacity=".7"/></g><path d="M25 69l4 10 14 8 12 5 10 6 35 2V88l-12-4-16-3-10-1-6-6-2-4-12-1-10-2z" fill="#0c0606"/></svg><span id="t111" class="t " style="left:109.4px;top:44.8px;font-size:17px;color:#2a2a2a;letter-spacing:-0.059px;">sample_audio_12</span><svg style="position:absolute;left:37.20px;top:101.10px;overflow:hidden" width="65.4" height="65.4" viewBox="0 0 100 100" preserveAspectRatio="none"><defs><linearGradient id="h15a" x1="0" y1="0" x2="0" y2="1"><stop offset="0" stop-color="#7e98bc"/><stop offset="0.2" stop-color="#a8c0d8"/><stop offset="0.36" stop-color="#c8d8e4"/><stop offset="0.55" stop-color="#e8eef0"/><stop offset="0.75" stop-color="#b8c4dc"/><stop offset="1" stop-color="#7088bc"/></linearGradient><filter id="h15b" x="-30%" y="-30%" width="160%" height="160%"><feGaussianBlur stdDeviation="1.8"/></filter></defs><rect width="100" height="100" fill="url(#h15a)"/><path d="M40 30 62 14 100 34V40H30z" fill="#8aaac8" fill-opacity=".55"/><g filter="url(#h15b)"><path d="M0 42c8-6 22-8 32-4 10 3 20 6 18 12-6 8-22 12-34 16L0 70z" fill="#356e2c"/><path d="M100 40c-10 0-22 4-28 12-4 8 6 12 14 14l14 2z" fill="#356e2c"/><path d="M0 64c12-2 26-8 40-14-10 12-24 20-40 26z" fill="#5a8a58" fill-opacity=".5"/><path d="M76 68h24v18c-12 0-22-6-24-18z" fill="#5a8a68" fill-opacity=".45"/><ellipse cx="56" cy="62" rx="12" ry="22" fill="#f4f8fa" fill-opacity=".75"/></g></svg><span id="t112" class="t " style="left:109.4px;top:125.8px;font-size:17px;color:#2a2a2a;letter-spacing:-0.133px;">sample_audio_11</span><svg style="position:absolute;left:37.20px;top:182.10px;overflow:hidden" width="65.4" height="65.4" viewBox="0 0 100 100" preserveAspectRatio="none"><defs><linearGradient id="h16a" x1="0" y1="0" x2="-0.12" y2="1"><stop offset="0" stop-color="#6e4718"/><stop offset="0.14" stop-color="#8f6426"/><stop offset="0.2" stop-color="#a87c3a"/><stop offset="0.24" stop-color="#8a5e24"/><stop offset="0.36" stop-color="#a67a36"/><stop offset="0.5" stop-color="#8a5c22"/><stop offset="0.62" stop-color="#75491a"/><stop offset="0.8" stop-color="#5c3914"/><stop offset="1" stop-color="#38210b"/></linearGradient><filter id="h16b" x="-30%" y="-30%" width="160%" height="160%"><feGaussianBlur stdDeviation="2.4"/></filter></defs><rect width="100" height="100" fill="url(#h16a)"/><g filter="url(#h16b)"><path d="M-5 50 105 26V38L-5 66z" fill="#f0cf80"/><path d="M-5 56 105 34V39L-5 64z" fill="#fbe6a8" fill-opacity=".8"/><path d="M-5 66 105 44V56L-5 80z" fill="#5a3812" fill-opacity=".75"/></g><path d="M30 52c8-3 16-3 26-2s28 3 44 4v4c-14-1-32-3-44-5s-18-1-26 1z" fill="#2a1808" fill-opacity=".9"/><rect width="100" height="100" fill="none" stroke="#2a1808" stroke-opacity=".45" stroke-width="5"/></svg><span id="t113" class="t " style="left:109.4px;top:206.8px;font-size:17px;color:#2a2a2a;letter-spacing:-0.009px;">sample_audio_10</span><svg style="position:absolute;left:37.20px;top:263.10px;overflow:hidden" width="65.4" height="65.4" viewBox="0 0 100 100" preserveAspectRatio="none"><defs><linearGradient id="h17a" x1="0" y1="0" x2="0" y2="1"><stop offset="0" stop-color="#86b4a0"/><stop offset="0.3" stop-color="#9cc6b0"/><stop offset="0.7" stop-color="#a8cfba"/><stop offset="1" stop-color="#b4d4c4"/></linearGradient></defs><rect width="100" height="100" fill="url(#h17a)"/><path d="M22 66c10 10 30 10 44 4 8-3 12-7 14-12-16 8-40 12-58 8z" fill="#6a9c80" fill-opacity=".7"/><path d="M21 48c14-6 40-12 60-8-2 12-10 18-22 20-10 2-20 4-26 4-6-4-10-10-12-16z" fill="#e4dc90"/><path d="M21 48c14-6 40-12 60-8l-4 4c-16-1-36 2-52 7z" fill="#f6f2cc"/><path d="M28 56c16 2 34-2 50-12-4 10-10 14-20 16-10 2-18 4-24 4z" fill="#b0a858"/><path d="M72 36l4 2 2 8-4-3z" fill="#3a3a34"/><ellipse cx="97" cy="55" rx="9" ry="8" fill="#5a5a54"/></svg><span id="t114" class="t " style="left:109.4px;top:287.8px;font-size:17px;color:#2a2a2a;letter-spacing:0.305px;">cool_preview_5</span><svg style="position:absolute;left:37.20px;top:344.10px;overflow:hidden" width="65.4" height="65.4" viewBox="0 0 100 100" preserveAspectRatio="none"><defs><linearGradient id="h18a" x1="0" y1="0" x2="-0.04" y2="1"><stop offset="0" stop-color="#4a7cc2"/><stop offset="0.12" stop-color="#5888c0"/><stop offset="0.28" stop-color="#86a0a8"/><stop offset="0.42" stop-color="#c0b490"/><stop offset="0.52" stop-color="#cf9e6c"/><stop offset="0.64" stop-color="#d8935a"/><stop offset="0.66" stop-color="#f4d9a4"/><stop offset="0.7" stop-color="#e0a060"/><stop offset="0.84" stop-color="#c97c48"/><stop offset="0.88" stop-color="#e8ac6c"/><stop offset="1" stop-color="#d88f54"/></linearGradient></defs><rect width="100" height="100" fill="url(#h18a)"/></svg><span id="t115" class="t " style="left:109.4px;top:368.8px;font-size:17px;color:#2a2a2a;letter-spacing:0.180px;">sample_audio_5</span><svg style="position:absolute;left:37.20px;top:425.10px;overflow:hidden" width="65.4" height="65.4" viewBox="0 0 100 100" preserveAspectRatio="none"><defs><linearGradient id="h19a" x1="0" y1="0" x2="0" y2="1"><stop offset="0" stop-color="#5e8cc6"/><stop offset="0.2" stop-color="#8aaed8"/><stop offset="0.36" stop-color="#c8c8e0"/><stop offset="0.44" stop-color="#eee0e6"/><stop offset="0.47" stop-color="#3460a8"/><stop offset="0.5" stop-color="#7898cc"/><stop offset="0.6" stop-color="#6c94d0"/><stop offset="0.8" stop-color="#4a7cc8"/><stop offset="1" stop-color="#2f62b8"/></linearGradient></defs><rect width="100" height="100" fill="url(#h19a)"/><path d="M0 40h14l8 3 14 2 14 2H0z" fill="#2c4f96"/></svg><span id="t116" class="t " style="left:109.4px;top:449.8px;font-size:17px;color:#2a2a2a;letter-spacing:0.180px;">sample_audio_2</span><div class="" style="position:absolute;left:20.2px;top:263.0px;width:3.8px;height:65.0px;background:#e03a2e"></div></div>
<div class="" style="position:absolute;left:402.2px;top:4.0px;width:10.8px;height:186.5px;border-radius:5.400px;background:rgba(70,95,130,.50)"></div>
<div class="" style="position:absolute;left:0.0px;top:455.0px;width:417.0px;height:1.0px;background:rgba(0,0,0,.13)"></div>
<span id="t117" class="t " style="left:28.1px;top:475.1px;font-size:17px;color:#3a3a3a;letter-spacing:0.114px;">00:12</span>
<span id="t118" class="t " style="left:337.6px;top:475.1px;font-size:17px;color:#3a3a3a;letter-spacing:0.419px;">-00:17</span>
<div class="" style="position:absolute;left:99.8px;top:480.6px;width:208.5px;height:5.6px;border-radius:3px;background:#d6d6d6"></div>
<div class="" style="position:absolute;left:99.8px;top:480.6px;width:91.2px;height:5.6px;border-radius:3px;background:#3f7ff0"></div>
<div class="" style="position:absolute;left:174.1px;top:470.5px;width:25.8px;height:25.8px;border-radius:50%;background:#7f7f7f"></div>
<span id="t119" class="t " style="left:147.2px;top:506.4px;font-size:17px;color:#2e2e2e;letter-spacing:0.289px;">cool_preview_5</span>
<span id="t120" class="t " style="left:160.0px;top:534.9px;font-size:17px;color:#8d8d8d;letter-spacing:0.284px;">Matt Luedke</span>
<svg style="position:absolute;left:31.80px;top:570.30px;overflow:visible;" width="26.40" height="19.00" viewBox="0 0 26.4 19"><rect x="0" y="0" width="3.100" height="19" fill="#0c0c0c"/><path d="M15 .800V18.200L3.300 9.500zM26.400 .800V18.200L14.700 9.500z" fill="#0c0c0c"/></svg>
<svg style="position:absolute;left:357.80px;top:570.30px;overflow:visible;" width="26.40" height="19.00" viewBox="0 0 26.4 19"><rect x="23.300" y="0" width="3.100" height="19" fill="#0c0c0c"/><path d="M11.400 .800V18.200L23.100 9.500zM0 .800V18.200L11.700 9.500z" fill="#0c0c0c"/></svg>
<svg style="position:absolute;left:200.60px;top:570.30px;overflow:visible;" width="14.80" height="19.00" viewBox="0 0 14.8 19"><rect x="0" y="0" width="3.300" height="19" fill="#0c0c0c"/><rect x="11.500" y="0" width="3.300" height="19" fill="#0c0c0c"/></svg>
<svg style="position:absolute;left:115.50px;top:567.40px;overflow:visible;" width="22.00" height="23.20" viewBox="0 0 22 23.200"><path d="M12 4.380A9.400 9.400 0 1 1 2.280 9.730" fill="none" stroke="#0c0c0c" stroke-width="1.700" stroke-linecap="round"/><path d="M9.900 .200V6.500L5.400 3.350zM14.400 .200V6.500L9.900 3.350z" fill="#0c0c0c"/><text x="10.600" y="17.600" text-anchor="middle" font-family="Liberation Sans,sans-serif" font-weight="700" font-size="10.800" letter-spacing="-.400" fill="#0c0c0c">15</text></svg>
<svg style="position:absolute;left:278.60px;top:567.40px;overflow:visible;" width="22.00" height="23.20" viewBox="0 0 22 23.200"><path d="M10 4.380A9.400 9.400 0 1 0 19.720 9.730" fill="none" stroke="#0c0c0c" stroke-width="1.700" stroke-linecap="round"/><path d="M12.100 .200V6.500L16.600 3.350zM7.600 .200V6.500L12.100 3.350z" fill="#0c0c0c"/><text x="11.200" y="17.600" text-anchor="middle" font-family="Liberation Sans,sans-serif" font-weight="700" font-size="10.800" letter-spacing="-.400" fill="#0c0c0c">15</text></svg>
<svg style="position:absolute;left:30.80px;top:615.70px;overflow:visible;" width="23.20" height="20.00" viewBox="0 0 23.2 20"><path d="M0 6.300H4.800L11.600 .600V19.400L4.800 13.700H0z" fill="#0c0c0c"/><path d="M14.800 5.600A6.400 6.400 0 0 1 14.800 14.400M18.200 2A11.400 11.400 0 0 1 18.200 18" fill="none" stroke="#0c0c0c" stroke-width="1.700" stroke-linecap="round"/></svg>
<div class="" style="position:absolute;left:62.0px;top:622.4px;width:171.9px;height:5.6px;border-radius:3px;background:#d6d6d6"></div>
<div class="" style="position:absolute;left:62.0px;top:622.4px;width:102.0px;height:5.6px;border-radius:3px;background:#3f7ff0"></div>
<div class="" style="position:absolute;left:146.6px;top:612.3px;width:25.8px;height:25.8px;border-radius:50%;background:#7f7f7f"></div>
<svg style="position:absolute;left:277.20px;top:615.70px;overflow:visible;" width="25.10" height="20.00" viewBox="0 0 25.1 20"><path d="M2.600 10.800V8.600a3.600 3.600 0 0 1 3.600-3.600H21M22.500 9.200v2.200a3.600 3.600 0 0 1-3.600 3.600H4.100" fill="none" stroke="#0c0c0c" stroke-width="2.100" stroke-linecap="round"/><path d="M18.800 .600 24.600 5 18.800 9.400zM6.300 10.600.500 15 6.300 19.400z" fill="#0c0c0c"/></svg>
<svg style="position:absolute;left:357.80px;top:615.70px;overflow:visible;" width="26.40" height="20.00" viewBox="0 0 26.4 20"><path d="M1.200 5H5.400C10 5 12.400 15 17.400 15H21M1.200 15H5.400C7.600 15 9 13.200 10.400 11.200M13.400 8C14.600 6.200 15.800 5 17.400 5H21" fill="none" stroke="#0c0c0c" stroke-width="2.100" stroke-linecap="round"/><path d="M20 .800 26 5 20 9.200zM20 10.800 26 15 20 19.200z" fill="#0c0c0c"/></svg></div><svg style="position:absolute;left:247.3px;top:-17.3px;overflow:visible" width="30" height="17" viewBox="0 0 30 17"><path d="M-1 17C1.500 17 2.800 16.300 4 14.800L13.700 1.500Q15 -.200 16.300 1.500L26 14.800C27.200 16.300 28.500 17 31 17" fill="#ebebec" stroke="rgba(0,0,0,.17)" stroke-width=".900"/><rect x="-.500" y="16.600" width="31" height="2" fill="#ebebec"/></svg></div></div></div>
</body></html>
